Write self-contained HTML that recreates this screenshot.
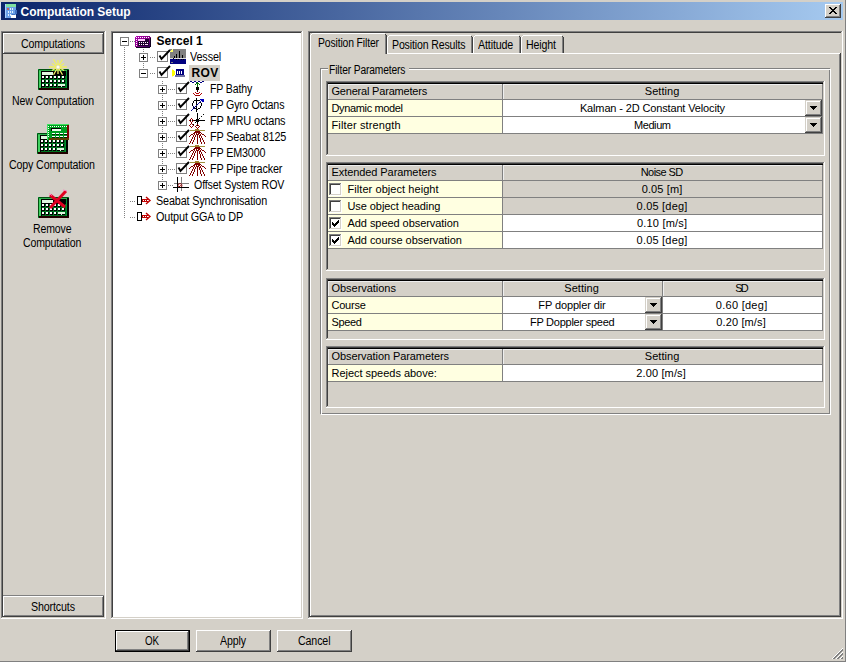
<!DOCTYPE html><html><head><meta charset="utf-8"><style>
html,body{margin:0;padding:0;width:846px;height:662px;overflow:hidden;background:#d4d0c8}
div,span,svg{position:absolute}
span{white-space:pre}
</style></head><body>
<div style="left:0px;top:0px;width:846px;height:662px;background:#d4d0c8;"></div>
<div style="left:845px;top:0px;width:1px;height:662px;background:#808080;"></div>
<div style="left:0px;top:661px;width:846px;height:1px;background:#808080;"></div>
<div style="left:844px;top:0px;width:1px;height:661px;background:#d4d0c8;"></div>
<div style="left:0px;top:2px;width:1px;height:18px;background:#d8dcf0;"></div>
<div style="left:1px;top:2px;width:842px;height:18px;background:linear-gradient(to right,#0a246a,#a6caf0);"></div>
<div style="left:825px;top:4px;width:16px;height:14px;background:#d4d0c8;"></div>
<div style="left:825px;top:4px;width:16px;height:1px;background:#ffffff;"></div>
<div style="left:825px;top:4px;width:1px;height:14px;background:#ffffff;"></div>
<div style="left:825px;top:17px;width:16px;height:1px;background:#404040;"></div>
<div style="left:840px;top:4px;width:1px;height:14px;background:#404040;"></div>
<div style="left:826px;top:16px;width:14px;height:1px;background:#808080;"></div>
<div style="left:839px;top:5px;width:1px;height:12px;background:#808080;"></div>
<div style="left:829px;top:7px;width:1px;height:1px;background:#000;"></div>
<div style="left:830px;top:7px;width:1px;height:1px;background:#000;"></div>
<div style="left:835px;top:7px;width:1px;height:1px;background:#000;"></div>
<div style="left:836px;top:7px;width:1px;height:1px;background:#000;"></div>
<div style="left:830px;top:8px;width:1px;height:1px;background:#000;"></div>
<div style="left:831px;top:8px;width:1px;height:1px;background:#000;"></div>
<div style="left:834px;top:8px;width:1px;height:1px;background:#000;"></div>
<div style="left:835px;top:8px;width:1px;height:1px;background:#000;"></div>
<div style="left:831px;top:9px;width:1px;height:1px;background:#000;"></div>
<div style="left:832px;top:9px;width:1px;height:1px;background:#000;"></div>
<div style="left:833px;top:9px;width:1px;height:1px;background:#000;"></div>
<div style="left:834px;top:9px;width:1px;height:1px;background:#000;"></div>
<div style="left:832px;top:10px;width:1px;height:1px;background:#000;"></div>
<div style="left:833px;top:10px;width:1px;height:1px;background:#000;"></div>
<div style="left:831px;top:11px;width:1px;height:1px;background:#000;"></div>
<div style="left:832px;top:11px;width:1px;height:1px;background:#000;"></div>
<div style="left:833px;top:11px;width:1px;height:1px;background:#000;"></div>
<div style="left:834px;top:11px;width:1px;height:1px;background:#000;"></div>
<div style="left:830px;top:12px;width:1px;height:1px;background:#000;"></div>
<div style="left:831px;top:12px;width:1px;height:1px;background:#000;"></div>
<div style="left:834px;top:12px;width:1px;height:1px;background:#000;"></div>
<div style="left:835px;top:12px;width:1px;height:1px;background:#000;"></div>
<div style="left:829px;top:13px;width:1px;height:1px;background:#000;"></div>
<div style="left:830px;top:13px;width:1px;height:1px;background:#000;"></div>
<div style="left:835px;top:13px;width:1px;height:1px;background:#000;"></div>
<div style="left:836px;top:13px;width:1px;height:1px;background:#000;"></div>
<div style="left:1px;top:31px;width:105px;height:588px;background:#d4d0c8;"></div>
<div style="left:1px;top:31px;width:105px;height:1px;background:#808080;"></div>
<div style="left:1px;top:31px;width:1px;height:588px;background:#808080;"></div>
<div style="left:1px;top:618px;width:105px;height:1px;background:#ffffff;"></div>
<div style="left:105px;top:31px;width:1px;height:588px;background:#ffffff;"></div>
<div style="left:2px;top:32px;width:103px;height:1px;background:#404040;"></div>
<div style="left:2px;top:32px;width:1px;height:586px;background:#404040;"></div>
<div style="left:2px;top:617px;width:103px;height:1px;background:#d4d0c8;"></div>
<div style="left:104px;top:32px;width:1px;height:586px;background:#d4d0c8;"></div>
<div style="left:3px;top:33px;width:101px;height:21px;background:#d4d0c8;"></div>
<div style="left:3px;top:33px;width:101px;height:1px;background:#ffffff;"></div>
<div style="left:3px;top:33px;width:1px;height:21px;background:#ffffff;"></div>
<div style="left:3px;top:53px;width:101px;height:1px;background:#404040;"></div>
<div style="left:103px;top:33px;width:1px;height:21px;background:#404040;"></div>
<div style="left:4px;top:52px;width:99px;height:1px;background:#808080;"></div>
<div style="left:102px;top:34px;width:1px;height:19px;background:#808080;"></div>
<div style="left:3px;top:595px;width:101px;height:1px;background:#808080;"></div>
<div style="left:3px;top:596px;width:101px;height:21px;background:#d4d0c8;"></div>
<div style="left:3px;top:596px;width:101px;height:1px;background:#ffffff;"></div>
<div style="left:3px;top:596px;width:1px;height:21px;background:#ffffff;"></div>
<div style="left:3px;top:616px;width:101px;height:1px;background:#404040;"></div>
<div style="left:103px;top:596px;width:1px;height:21px;background:#404040;"></div>
<div style="left:4px;top:615px;width:99px;height:1px;background:#808080;"></div>
<div style="left:102px;top:597px;width:1px;height:19px;background:#808080;"></div>
<div style="left:111px;top:31px;width:192px;height:588px;background:#ffffff;"></div>
<div style="left:111px;top:31px;width:192px;height:1px;background:#808080;"></div>
<div style="left:111px;top:31px;width:1px;height:588px;background:#808080;"></div>
<div style="left:111px;top:618px;width:192px;height:1px;background:#ffffff;"></div>
<div style="left:302px;top:31px;width:1px;height:588px;background:#ffffff;"></div>
<div style="left:112px;top:32px;width:190px;height:1px;background:#404040;"></div>
<div style="left:112px;top:32px;width:1px;height:586px;background:#404040;"></div>
<div style="left:112px;top:617px;width:190px;height:1px;background:#d4d0c8;"></div>
<div style="left:301px;top:32px;width:1px;height:586px;background:#d4d0c8;"></div>
<div style="left:308px;top:31px;width:535px;height:588px;background:#d4d0c8;"></div>
<div style="left:308px;top:31px;width:535px;height:1px;background:#808080;"></div>
<div style="left:308px;top:31px;width:1px;height:588px;background:#808080;"></div>
<div style="left:308px;top:618px;width:535px;height:1px;background:#ffffff;"></div>
<div style="left:842px;top:31px;width:1px;height:588px;background:#ffffff;"></div>
<div style="left:309px;top:32px;width:533px;height:1px;background:#404040;"></div>
<div style="left:309px;top:32px;width:1px;height:586px;background:#404040;"></div>
<div style="left:309px;top:617px;width:533px;height:1px;background:#d4d0c8;"></div>
<div style="left:841px;top:32px;width:1px;height:586px;background:#d4d0c8;"></div>
<div style="left:310px;top:53px;width:531px;height:1px;background:#ffffff;"></div>
<div style="left:310px;top:53px;width:1px;height:564px;background:#ffffff;"></div>
<div style="left:310px;top:616px;width:531px;height:1px;background:#404040;"></div>
<div style="left:840px;top:53px;width:1px;height:564px;background:#404040;"></div>
<div style="left:311px;top:615px;width:529px;height:1px;background:#808080;"></div>
<div style="left:839px;top:54px;width:1px;height:562px;background:#808080;"></div>
<div style="left:115px;top:630px;width:75px;height:22px;background:#000;"></div>
<div style="left:116px;top:631px;width:73px;height:20px;background:#d4d0c8;"></div>
<div style="left:116px;top:631px;width:73px;height:1px;background:#ffffff;"></div>
<div style="left:116px;top:631px;width:1px;height:20px;background:#ffffff;"></div>
<div style="left:116px;top:650px;width:73px;height:1px;background:#404040;"></div>
<div style="left:188px;top:631px;width:1px;height:20px;background:#404040;"></div>
<div style="left:117px;top:649px;width:71px;height:1px;background:#808080;"></div>
<div style="left:187px;top:632px;width:1px;height:18px;background:#808080;"></div>
<div style="left:196px;top:630px;width:75px;height:22px;background:#d4d0c8;"></div>
<div style="left:196px;top:630px;width:75px;height:1px;background:#ffffff;"></div>
<div style="left:196px;top:630px;width:1px;height:22px;background:#ffffff;"></div>
<div style="left:196px;top:651px;width:75px;height:1px;background:#404040;"></div>
<div style="left:270px;top:630px;width:1px;height:22px;background:#404040;"></div>
<div style="left:197px;top:650px;width:73px;height:1px;background:#808080;"></div>
<div style="left:269px;top:631px;width:1px;height:20px;background:#808080;"></div>
<div style="left:277px;top:630px;width:75px;height:22px;background:#d4d0c8;"></div>
<div style="left:277px;top:630px;width:75px;height:1px;background:#ffffff;"></div>
<div style="left:277px;top:630px;width:1px;height:22px;background:#ffffff;"></div>
<div style="left:277px;top:651px;width:75px;height:1px;background:#404040;"></div>
<div style="left:351px;top:630px;width:1px;height:22px;background:#404040;"></div>
<div style="left:278px;top:650px;width:73px;height:1px;background:#808080;"></div>
<div style="left:350px;top:631px;width:1px;height:20px;background:#808080;"></div>
<div style="left:832px;top:658px;width:1px;height:1px;background:#fff;"></div>
<div style="left:833px;top:657px;width:1px;height:1px;background:#fff;"></div>
<div style="left:833px;top:658px;width:1px;height:1px;background:#808080;"></div>
<div style="left:834px;top:656px;width:1px;height:1px;background:#fff;"></div>
<div style="left:834px;top:657px;width:1px;height:1px;background:#808080;"></div>
<div style="left:834px;top:658px;width:1px;height:1px;background:#808080;"></div>
<div style="left:835px;top:655px;width:1px;height:1px;background:#fff;"></div>
<div style="left:835px;top:656px;width:1px;height:1px;background:#808080;"></div>
<div style="left:835px;top:657px;width:1px;height:1px;background:#808080;"></div>
<div style="left:836px;top:654px;width:1px;height:1px;background:#fff;"></div>
<div style="left:836px;top:655px;width:1px;height:1px;background:#808080;"></div>
<div style="left:836px;top:656px;width:1px;height:1px;background:#808080;"></div>
<div style="left:836px;top:658px;width:1px;height:1px;background:#fff;"></div>
<div style="left:837px;top:653px;width:1px;height:1px;background:#fff;"></div>
<div style="left:837px;top:654px;width:1px;height:1px;background:#808080;"></div>
<div style="left:837px;top:655px;width:1px;height:1px;background:#808080;"></div>
<div style="left:837px;top:657px;width:1px;height:1px;background:#fff;"></div>
<div style="left:837px;top:658px;width:1px;height:1px;background:#808080;"></div>
<div style="left:838px;top:652px;width:1px;height:1px;background:#fff;"></div>
<div style="left:838px;top:653px;width:1px;height:1px;background:#808080;"></div>
<div style="left:838px;top:654px;width:1px;height:1px;background:#808080;"></div>
<div style="left:838px;top:656px;width:1px;height:1px;background:#fff;"></div>
<div style="left:838px;top:657px;width:1px;height:1px;background:#808080;"></div>
<div style="left:838px;top:658px;width:1px;height:1px;background:#808080;"></div>
<div style="left:839px;top:651px;width:1px;height:1px;background:#fff;"></div>
<div style="left:839px;top:652px;width:1px;height:1px;background:#808080;"></div>
<div style="left:839px;top:653px;width:1px;height:1px;background:#808080;"></div>
<div style="left:839px;top:655px;width:1px;height:1px;background:#fff;"></div>
<div style="left:839px;top:656px;width:1px;height:1px;background:#808080;"></div>
<div style="left:839px;top:657px;width:1px;height:1px;background:#808080;"></div>
<div style="left:840px;top:650px;width:1px;height:1px;background:#fff;"></div>
<div style="left:840px;top:651px;width:1px;height:1px;background:#808080;"></div>
<div style="left:840px;top:652px;width:1px;height:1px;background:#808080;"></div>
<div style="left:840px;top:654px;width:1px;height:1px;background:#fff;"></div>
<div style="left:840px;top:655px;width:1px;height:1px;background:#808080;"></div>
<div style="left:840px;top:656px;width:1px;height:1px;background:#808080;"></div>
<div style="left:840px;top:658px;width:1px;height:1px;background:#fff;"></div>
<div style="left:841px;top:649px;width:1px;height:1px;background:#fff;"></div>
<div style="left:841px;top:650px;width:1px;height:1px;background:#808080;"></div>
<div style="left:841px;top:651px;width:1px;height:1px;background:#808080;"></div>
<div style="left:841px;top:653px;width:1px;height:1px;background:#fff;"></div>
<div style="left:841px;top:654px;width:1px;height:1px;background:#808080;"></div>
<div style="left:841px;top:655px;width:1px;height:1px;background:#808080;"></div>
<div style="left:841px;top:657px;width:1px;height:1px;background:#fff;"></div>
<div style="left:841px;top:658px;width:1px;height:1px;background:#808080;"></div>
<div style="left:842px;top:648px;width:1px;height:1px;background:#fff;"></div>
<div style="left:842px;top:649px;width:1px;height:1px;background:#808080;"></div>
<div style="left:842px;top:650px;width:1px;height:1px;background:#808080;"></div>
<div style="left:842px;top:652px;width:1px;height:1px;background:#fff;"></div>
<div style="left:842px;top:653px;width:1px;height:1px;background:#808080;"></div>
<div style="left:842px;top:654px;width:1px;height:1px;background:#808080;"></div>
<div style="left:842px;top:656px;width:1px;height:1px;background:#fff;"></div>
<div style="left:842px;top:657px;width:1px;height:1px;background:#808080;"></div>
<div style="left:842px;top:658px;width:1px;height:1px;background:#808080;"></div>
<div style="left:189px;top:65px;width:31px;height:16px;background:#d4d0c8;"></div>
<div style="left:387px;top:35px;width:86px;height:18px;background:#d4d0c8;"></div>
<div style="left:389px;top:35px;width:82px;height:1px;background:#fff;"></div>
<div style="left:388px;top:36px;width:1px;height:1px;background:#fff;"></div>
<div style="left:387px;top:37px;width:1px;height:16px;background:#fff;"></div>
<div style="left:471px;top:36px;width:1px;height:1px;background:#404040;"></div>
<div style="left:472px;top:37px;width:1px;height:16px;background:#404040;"></div>
<div style="left:471px;top:37px;width:1px;height:16px;background:#808080;"></div>
<div style="left:473px;top:35px;width:48px;height:18px;background:#d4d0c8;"></div>
<div style="left:475px;top:35px;width:44px;height:1px;background:#fff;"></div>
<div style="left:474px;top:36px;width:1px;height:1px;background:#fff;"></div>
<div style="left:473px;top:37px;width:1px;height:16px;background:#fff;"></div>
<div style="left:519px;top:36px;width:1px;height:1px;background:#404040;"></div>
<div style="left:520px;top:37px;width:1px;height:16px;background:#404040;"></div>
<div style="left:519px;top:37px;width:1px;height:16px;background:#808080;"></div>
<div style="left:521px;top:35px;width:43px;height:18px;background:#d4d0c8;"></div>
<div style="left:523px;top:35px;width:39px;height:1px;background:#fff;"></div>
<div style="left:522px;top:36px;width:1px;height:1px;background:#fff;"></div>
<div style="left:521px;top:37px;width:1px;height:16px;background:#fff;"></div>
<div style="left:562px;top:36px;width:1px;height:1px;background:#404040;"></div>
<div style="left:563px;top:37px;width:1px;height:16px;background:#404040;"></div>
<div style="left:562px;top:37px;width:1px;height:16px;background:#808080;"></div>
<div style="left:310px;top:33px;width:77px;height:21px;background:#d4d0c8;"></div>
<div style="left:312px;top:33px;width:73px;height:1px;background:#fff;"></div>
<div style="left:311px;top:34px;width:1px;height:1px;background:#fff;"></div>
<div style="left:310px;top:35px;width:1px;height:19px;background:#fff;"></div>
<div style="left:385px;top:34px;width:1px;height:1px;background:#404040;"></div>
<div style="left:386px;top:35px;width:1px;height:19px;background:#404040;"></div>
<div style="left:385px;top:35px;width:1px;height:19px;background:#808080;"></div>
<div style="left:320px;top:68px;width:510px;height:1px;background:#808080;"></div>
<div style="left:320px;top:68px;width:1px;height:346px;background:#808080;"></div>
<div style="left:320px;top:413px;width:510px;height:1px;background:#808080;"></div>
<div style="left:829px;top:68px;width:1px;height:346px;background:#808080;"></div>
<div style="left:321px;top:69px;width:510px;height:1px;background:#ffffff;"></div>
<div style="left:321px;top:69px;width:1px;height:346px;background:#ffffff;"></div>
<div style="left:321px;top:414px;width:510px;height:1px;background:#ffffff;"></div>
<div style="left:830px;top:69px;width:1px;height:346px;background:#ffffff;"></div>
<div style="left:328px;top:62px;width:81px;height:8px;background:#d4d0c8;"></div>
<div style="left:320px;top:68px;width:1px;height:1px;background:#808080;"></div>
<div style="left:326px;top:81px;width:499px;height:75px;background:#d4d0c8;"></div>
<div style="left:326px;top:81px;width:499px;height:1px;background:#808080;"></div>
<div style="left:326px;top:81px;width:1px;height:75px;background:#808080;"></div>
<div style="left:326px;top:155px;width:499px;height:1px;background:#ffffff;"></div>
<div style="left:824px;top:81px;width:1px;height:75px;background:#ffffff;"></div>
<div style="left:327px;top:82px;width:497px;height:1px;background:#404040;"></div>
<div style="left:327px;top:82px;width:1px;height:73px;background:#404040;"></div>
<div style="left:327px;top:154px;width:497px;height:1px;background:#d4d0c8;"></div>
<div style="left:823px;top:82px;width:1px;height:73px;background:#d4d0c8;"></div>
<div style="left:328px;top:83px;width:495px;height:1px;background:#000;"></div>
<div style="left:328px;top:84px;width:174px;height:1px;background:#eeeeee;"></div>
<div style="left:328px;top:84px;width:1px;height:15px;background:#eeeeee;"></div>
<div style="left:503px;top:84px;width:319px;height:1px;background:#eeeeee;"></div>
<div style="left:503px;top:84px;width:1px;height:15px;background:#eeeeee;"></div>
<div style="left:502px;top:84px;width:1px;height:50px;background:#808080;"></div>
<div style="left:822px;top:84px;width:1px;height:50px;background:#808080;"></div>
<div style="left:328px;top:99px;width:495px;height:1px;background:#808080;"></div>
<div style="left:328px;top:100px;width:174px;height:16px;background:#ffffe1;"></div>
<div style="left:503px;top:100px;width:319px;height:16px;background:#fff;"></div>
<div style="left:328px;top:116px;width:495px;height:1px;background:#808080;"></div>
<div style="left:328px;top:117px;width:174px;height:16px;background:#ffffe1;"></div>
<div style="left:503px;top:117px;width:319px;height:16px;background:#fff;"></div>
<div style="left:328px;top:133px;width:495px;height:1px;background:#808080;"></div>
<div style="left:805px;top:100px;width:17px;height:16px;background:#d4d0c8;"></div>
<div style="left:805px;top:100px;width:17px;height:1px;background:#d4d0c8;"></div>
<div style="left:805px;top:100px;width:1px;height:16px;background:#d4d0c8;"></div>
<div style="left:805px;top:115px;width:17px;height:1px;background:#404040;"></div>
<div style="left:821px;top:100px;width:1px;height:16px;background:#404040;"></div>
<div style="left:806px;top:101px;width:15px;height:1px;background:#fff;"></div>
<div style="left:806px;top:101px;width:1px;height:14px;background:#fff;"></div>
<div style="left:806px;top:114px;width:15px;height:1px;background:#808080;"></div>
<div style="left:820px;top:101px;width:1px;height:14px;background:#808080;"></div>
<div style="left:810px;top:106px;width:7px;height:1px;background:#000;"></div>
<div style="left:811px;top:107px;width:5px;height:1px;background:#000;"></div>
<div style="left:812px;top:108px;width:3px;height:1px;background:#000;"></div>
<div style="left:813px;top:109px;width:1px;height:1px;background:#000;"></div>
<div style="left:805px;top:117px;width:17px;height:16px;background:#d4d0c8;"></div>
<div style="left:805px;top:117px;width:17px;height:1px;background:#d4d0c8;"></div>
<div style="left:805px;top:117px;width:1px;height:16px;background:#d4d0c8;"></div>
<div style="left:805px;top:132px;width:17px;height:1px;background:#404040;"></div>
<div style="left:821px;top:117px;width:1px;height:16px;background:#404040;"></div>
<div style="left:806px;top:118px;width:15px;height:1px;background:#fff;"></div>
<div style="left:806px;top:118px;width:1px;height:14px;background:#fff;"></div>
<div style="left:806px;top:131px;width:15px;height:1px;background:#808080;"></div>
<div style="left:820px;top:118px;width:1px;height:14px;background:#808080;"></div>
<div style="left:810px;top:123px;width:7px;height:1px;background:#000;"></div>
<div style="left:811px;top:124px;width:5px;height:1px;background:#000;"></div>
<div style="left:812px;top:125px;width:3px;height:1px;background:#000;"></div>
<div style="left:813px;top:126px;width:1px;height:1px;background:#000;"></div>
<div style="left:326px;top:162px;width:499px;height:109px;background:#d4d0c8;"></div>
<div style="left:326px;top:162px;width:499px;height:1px;background:#808080;"></div>
<div style="left:326px;top:162px;width:1px;height:109px;background:#808080;"></div>
<div style="left:326px;top:270px;width:499px;height:1px;background:#ffffff;"></div>
<div style="left:824px;top:162px;width:1px;height:109px;background:#ffffff;"></div>
<div style="left:327px;top:163px;width:497px;height:1px;background:#404040;"></div>
<div style="left:327px;top:163px;width:1px;height:107px;background:#404040;"></div>
<div style="left:327px;top:269px;width:497px;height:1px;background:#d4d0c8;"></div>
<div style="left:823px;top:163px;width:1px;height:107px;background:#d4d0c8;"></div>
<div style="left:328px;top:164px;width:495px;height:1px;background:#000;"></div>
<div style="left:328px;top:165px;width:174px;height:1px;background:#eeeeee;"></div>
<div style="left:328px;top:165px;width:1px;height:15px;background:#eeeeee;"></div>
<div style="left:503px;top:165px;width:319px;height:1px;background:#eeeeee;"></div>
<div style="left:503px;top:165px;width:1px;height:15px;background:#eeeeee;"></div>
<div style="left:502px;top:165px;width:1px;height:84px;background:#808080;"></div>
<div style="left:822px;top:165px;width:1px;height:84px;background:#808080;"></div>
<div style="left:328px;top:180px;width:495px;height:1px;background:#808080;"></div>
<div style="left:328px;top:181px;width:174px;height:16px;background:#ffffe1;"></div>
<div style="left:503px;top:181px;width:319px;height:16px;background:#d4d0c8;"></div>
<div style="left:328px;top:197px;width:495px;height:1px;background:#808080;"></div>
<div style="left:328px;top:198px;width:174px;height:16px;background:#ffffe1;"></div>
<div style="left:503px;top:198px;width:319px;height:16px;background:#d4d0c8;"></div>
<div style="left:328px;top:214px;width:495px;height:1px;background:#808080;"></div>
<div style="left:328px;top:215px;width:174px;height:16px;background:#ffffe1;"></div>
<div style="left:503px;top:215px;width:319px;height:16px;background:#fff;"></div>
<div style="left:328px;top:231px;width:495px;height:1px;background:#808080;"></div>
<div style="left:328px;top:232px;width:174px;height:16px;background:#ffffe1;"></div>
<div style="left:503px;top:232px;width:319px;height:16px;background:#fff;"></div>
<div style="left:328px;top:248px;width:495px;height:1px;background:#808080;"></div>
<div style="left:329px;top:183px;width:13px;height:1px;background:#808080;"></div>
<div style="left:329px;top:183px;width:1px;height:13px;background:#808080;"></div>
<div style="left:329px;top:195px;width:13px;height:1px;background:#ffffff;"></div>
<div style="left:341px;top:183px;width:1px;height:13px;background:#ffffff;"></div>
<div style="left:330px;top:184px;width:11px;height:1px;background:#404040;"></div>
<div style="left:330px;top:184px;width:1px;height:11px;background:#404040;"></div>
<div style="left:330px;top:194px;width:11px;height:1px;background:#d4d0c8;"></div>
<div style="left:340px;top:184px;width:1px;height:11px;background:#d4d0c8;"></div>
<div style="left:331px;top:185px;width:9px;height:9px;background:#fff;"></div>
<div style="left:329px;top:200px;width:13px;height:1px;background:#808080;"></div>
<div style="left:329px;top:200px;width:1px;height:13px;background:#808080;"></div>
<div style="left:329px;top:212px;width:13px;height:1px;background:#ffffff;"></div>
<div style="left:341px;top:200px;width:1px;height:13px;background:#ffffff;"></div>
<div style="left:330px;top:201px;width:11px;height:1px;background:#404040;"></div>
<div style="left:330px;top:201px;width:1px;height:11px;background:#404040;"></div>
<div style="left:330px;top:211px;width:11px;height:1px;background:#d4d0c8;"></div>
<div style="left:340px;top:201px;width:1px;height:11px;background:#d4d0c8;"></div>
<div style="left:331px;top:202px;width:9px;height:9px;background:#fff;"></div>
<div style="left:329px;top:217px;width:13px;height:1px;background:#808080;"></div>
<div style="left:329px;top:217px;width:1px;height:13px;background:#808080;"></div>
<div style="left:329px;top:229px;width:13px;height:1px;background:#ffffff;"></div>
<div style="left:341px;top:217px;width:1px;height:13px;background:#ffffff;"></div>
<div style="left:330px;top:218px;width:11px;height:1px;background:#404040;"></div>
<div style="left:330px;top:218px;width:1px;height:11px;background:#404040;"></div>
<div style="left:330px;top:228px;width:11px;height:1px;background:#d4d0c8;"></div>
<div style="left:340px;top:218px;width:1px;height:11px;background:#d4d0c8;"></div>
<div style="left:331px;top:219px;width:9px;height:9px;background:#fff;"></div>
<div style="left:329px;top:234px;width:13px;height:1px;background:#808080;"></div>
<div style="left:329px;top:234px;width:1px;height:13px;background:#808080;"></div>
<div style="left:329px;top:246px;width:13px;height:1px;background:#ffffff;"></div>
<div style="left:341px;top:234px;width:1px;height:13px;background:#ffffff;"></div>
<div style="left:330px;top:235px;width:11px;height:1px;background:#404040;"></div>
<div style="left:330px;top:235px;width:1px;height:11px;background:#404040;"></div>
<div style="left:330px;top:245px;width:11px;height:1px;background:#d4d0c8;"></div>
<div style="left:340px;top:235px;width:1px;height:11px;background:#d4d0c8;"></div>
<div style="left:331px;top:236px;width:9px;height:9px;background:#fff;"></div>
<div style="left:326px;top:278px;width:499px;height:62px;background:#d4d0c8;"></div>
<div style="left:326px;top:278px;width:499px;height:1px;background:#808080;"></div>
<div style="left:326px;top:278px;width:1px;height:62px;background:#808080;"></div>
<div style="left:326px;top:339px;width:499px;height:1px;background:#ffffff;"></div>
<div style="left:824px;top:278px;width:1px;height:62px;background:#ffffff;"></div>
<div style="left:327px;top:279px;width:497px;height:1px;background:#404040;"></div>
<div style="left:327px;top:279px;width:1px;height:60px;background:#404040;"></div>
<div style="left:327px;top:338px;width:497px;height:1px;background:#d4d0c8;"></div>
<div style="left:823px;top:279px;width:1px;height:60px;background:#d4d0c8;"></div>
<div style="left:328px;top:280px;width:495px;height:1px;background:#000;"></div>
<div style="left:328px;top:281px;width:174px;height:1px;background:#eeeeee;"></div>
<div style="left:328px;top:281px;width:1px;height:15px;background:#eeeeee;"></div>
<div style="left:503px;top:281px;width:159px;height:1px;background:#eeeeee;"></div>
<div style="left:503px;top:281px;width:1px;height:15px;background:#eeeeee;"></div>
<div style="left:663px;top:281px;width:159px;height:1px;background:#eeeeee;"></div>
<div style="left:663px;top:281px;width:1px;height:15px;background:#eeeeee;"></div>
<div style="left:502px;top:281px;width:1px;height:50px;background:#808080;"></div>
<div style="left:662px;top:281px;width:1px;height:50px;background:#808080;"></div>
<div style="left:822px;top:281px;width:1px;height:50px;background:#808080;"></div>
<div style="left:328px;top:296px;width:495px;height:1px;background:#808080;"></div>
<div style="left:328px;top:297px;width:174px;height:16px;background:#ffffe1;"></div>
<div style="left:503px;top:297px;width:159px;height:16px;background:#fff;"></div>
<div style="left:663px;top:297px;width:159px;height:16px;background:#fff;"></div>
<div style="left:328px;top:313px;width:495px;height:1px;background:#808080;"></div>
<div style="left:328px;top:314px;width:174px;height:16px;background:#ffffe1;"></div>
<div style="left:503px;top:314px;width:159px;height:16px;background:#fff;"></div>
<div style="left:663px;top:314px;width:159px;height:16px;background:#fff;"></div>
<div style="left:328px;top:330px;width:495px;height:1px;background:#808080;"></div>
<div style="left:645px;top:297px;width:17px;height:16px;background:#d4d0c8;"></div>
<div style="left:645px;top:297px;width:17px;height:1px;background:#d4d0c8;"></div>
<div style="left:645px;top:297px;width:1px;height:16px;background:#d4d0c8;"></div>
<div style="left:645px;top:312px;width:17px;height:1px;background:#404040;"></div>
<div style="left:661px;top:297px;width:1px;height:16px;background:#404040;"></div>
<div style="left:646px;top:298px;width:15px;height:1px;background:#fff;"></div>
<div style="left:646px;top:298px;width:1px;height:14px;background:#fff;"></div>
<div style="left:646px;top:311px;width:15px;height:1px;background:#808080;"></div>
<div style="left:660px;top:298px;width:1px;height:14px;background:#808080;"></div>
<div style="left:650px;top:303px;width:7px;height:1px;background:#000;"></div>
<div style="left:651px;top:304px;width:5px;height:1px;background:#000;"></div>
<div style="left:652px;top:305px;width:3px;height:1px;background:#000;"></div>
<div style="left:653px;top:306px;width:1px;height:1px;background:#000;"></div>
<div style="left:645px;top:314px;width:17px;height:16px;background:#d4d0c8;"></div>
<div style="left:645px;top:314px;width:17px;height:1px;background:#d4d0c8;"></div>
<div style="left:645px;top:314px;width:1px;height:16px;background:#d4d0c8;"></div>
<div style="left:645px;top:329px;width:17px;height:1px;background:#404040;"></div>
<div style="left:661px;top:314px;width:1px;height:16px;background:#404040;"></div>
<div style="left:646px;top:315px;width:15px;height:1px;background:#fff;"></div>
<div style="left:646px;top:315px;width:1px;height:14px;background:#fff;"></div>
<div style="left:646px;top:328px;width:15px;height:1px;background:#808080;"></div>
<div style="left:660px;top:315px;width:1px;height:14px;background:#808080;"></div>
<div style="left:650px;top:320px;width:7px;height:1px;background:#000;"></div>
<div style="left:651px;top:321px;width:5px;height:1px;background:#000;"></div>
<div style="left:652px;top:322px;width:3px;height:1px;background:#000;"></div>
<div style="left:653px;top:323px;width:1px;height:1px;background:#000;"></div>
<div style="left:326px;top:346px;width:499px;height:62px;background:#d4d0c8;"></div>
<div style="left:326px;top:346px;width:499px;height:1px;background:#808080;"></div>
<div style="left:326px;top:346px;width:1px;height:62px;background:#808080;"></div>
<div style="left:326px;top:407px;width:499px;height:1px;background:#ffffff;"></div>
<div style="left:824px;top:346px;width:1px;height:62px;background:#ffffff;"></div>
<div style="left:327px;top:347px;width:497px;height:1px;background:#404040;"></div>
<div style="left:327px;top:347px;width:1px;height:60px;background:#404040;"></div>
<div style="left:327px;top:406px;width:497px;height:1px;background:#d4d0c8;"></div>
<div style="left:823px;top:347px;width:1px;height:60px;background:#d4d0c8;"></div>
<div style="left:328px;top:348px;width:495px;height:1px;background:#000;"></div>
<div style="left:328px;top:349px;width:174px;height:1px;background:#eeeeee;"></div>
<div style="left:328px;top:349px;width:1px;height:15px;background:#eeeeee;"></div>
<div style="left:503px;top:349px;width:319px;height:1px;background:#eeeeee;"></div>
<div style="left:503px;top:349px;width:1px;height:15px;background:#eeeeee;"></div>
<div style="left:502px;top:349px;width:1px;height:33px;background:#808080;"></div>
<div style="left:822px;top:349px;width:1px;height:33px;background:#808080;"></div>
<div style="left:328px;top:364px;width:495px;height:1px;background:#808080;"></div>
<div style="left:328px;top:365px;width:174px;height:16px;background:#ffffe1;"></div>
<div style="left:503px;top:365px;width:319px;height:16px;background:#fff;"></div>
<div style="left:328px;top:381px;width:495px;height:1px;background:#808080;"></div>
<svg style="position:absolute;left:0;top:0" width="846" height="662" shape-rendering="crispEdges"><rect x="124" y="47" width="1" height="1" fill="#808080"/><rect x="124" y="49" width="1" height="1" fill="#808080"/><rect x="124" y="51" width="1" height="1" fill="#808080"/><rect x="124" y="53" width="1" height="1" fill="#808080"/><rect x="124" y="55" width="1" height="1" fill="#808080"/><rect x="124" y="57" width="1" height="1" fill="#808080"/><rect x="124" y="59" width="1" height="1" fill="#808080"/><rect x="124" y="61" width="1" height="1" fill="#808080"/><rect x="124" y="63" width="1" height="1" fill="#808080"/><rect x="124" y="65" width="1" height="1" fill="#808080"/><rect x="124" y="67" width="1" height="1" fill="#808080"/><rect x="124" y="69" width="1" height="1" fill="#808080"/><rect x="124" y="71" width="1" height="1" fill="#808080"/><rect x="124" y="73" width="1" height="1" fill="#808080"/><rect x="124" y="75" width="1" height="1" fill="#808080"/><rect x="124" y="77" width="1" height="1" fill="#808080"/><rect x="124" y="79" width="1" height="1" fill="#808080"/><rect x="124" y="81" width="1" height="1" fill="#808080"/><rect x="124" y="83" width="1" height="1" fill="#808080"/><rect x="124" y="85" width="1" height="1" fill="#808080"/><rect x="124" y="87" width="1" height="1" fill="#808080"/><rect x="124" y="89" width="1" height="1" fill="#808080"/><rect x="124" y="91" width="1" height="1" fill="#808080"/><rect x="124" y="93" width="1" height="1" fill="#808080"/><rect x="124" y="95" width="1" height="1" fill="#808080"/><rect x="124" y="97" width="1" height="1" fill="#808080"/><rect x="124" y="99" width="1" height="1" fill="#808080"/><rect x="124" y="101" width="1" height="1" fill="#808080"/><rect x="124" y="103" width="1" height="1" fill="#808080"/><rect x="124" y="105" width="1" height="1" fill="#808080"/><rect x="124" y="107" width="1" height="1" fill="#808080"/><rect x="124" y="109" width="1" height="1" fill="#808080"/><rect x="124" y="111" width="1" height="1" fill="#808080"/><rect x="124" y="113" width="1" height="1" fill="#808080"/><rect x="124" y="115" width="1" height="1" fill="#808080"/><rect x="124" y="117" width="1" height="1" fill="#808080"/><rect x="124" y="119" width="1" height="1" fill="#808080"/><rect x="124" y="121" width="1" height="1" fill="#808080"/><rect x="124" y="123" width="1" height="1" fill="#808080"/><rect x="124" y="125" width="1" height="1" fill="#808080"/><rect x="124" y="127" width="1" height="1" fill="#808080"/><rect x="124" y="129" width="1" height="1" fill="#808080"/><rect x="124" y="131" width="1" height="1" fill="#808080"/><rect x="124" y="133" width="1" height="1" fill="#808080"/><rect x="124" y="135" width="1" height="1" fill="#808080"/><rect x="124" y="137" width="1" height="1" fill="#808080"/><rect x="124" y="139" width="1" height="1" fill="#808080"/><rect x="124" y="141" width="1" height="1" fill="#808080"/><rect x="124" y="143" width="1" height="1" fill="#808080"/><rect x="124" y="145" width="1" height="1" fill="#808080"/><rect x="124" y="147" width="1" height="1" fill="#808080"/><rect x="124" y="149" width="1" height="1" fill="#808080"/><rect x="124" y="151" width="1" height="1" fill="#808080"/><rect x="124" y="153" width="1" height="1" fill="#808080"/><rect x="124" y="155" width="1" height="1" fill="#808080"/><rect x="124" y="157" width="1" height="1" fill="#808080"/><rect x="124" y="159" width="1" height="1" fill="#808080"/><rect x="124" y="161" width="1" height="1" fill="#808080"/><rect x="124" y="163" width="1" height="1" fill="#808080"/><rect x="124" y="165" width="1" height="1" fill="#808080"/><rect x="124" y="167" width="1" height="1" fill="#808080"/><rect x="124" y="169" width="1" height="1" fill="#808080"/><rect x="124" y="171" width="1" height="1" fill="#808080"/><rect x="124" y="173" width="1" height="1" fill="#808080"/><rect x="124" y="175" width="1" height="1" fill="#808080"/><rect x="124" y="177" width="1" height="1" fill="#808080"/><rect x="124" y="179" width="1" height="1" fill="#808080"/><rect x="124" y="181" width="1" height="1" fill="#808080"/><rect x="124" y="183" width="1" height="1" fill="#808080"/><rect x="124" y="185" width="1" height="1" fill="#808080"/><rect x="124" y="187" width="1" height="1" fill="#808080"/><rect x="124" y="189" width="1" height="1" fill="#808080"/><rect x="124" y="191" width="1" height="1" fill="#808080"/><rect x="124" y="193" width="1" height="1" fill="#808080"/><rect x="124" y="195" width="1" height="1" fill="#808080"/><rect x="124" y="197" width="1" height="1" fill="#808080"/><rect x="124" y="199" width="1" height="1" fill="#808080"/><rect x="124" y="201" width="1" height="1" fill="#808080"/><rect x="124" y="203" width="1" height="1" fill="#808080"/><rect x="124" y="205" width="1" height="1" fill="#808080"/><rect x="124" y="207" width="1" height="1" fill="#808080"/><rect x="124" y="209" width="1" height="1" fill="#808080"/><rect x="124" y="211" width="1" height="1" fill="#808080"/><rect x="124" y="213" width="1" height="1" fill="#808080"/><rect x="124" y="215" width="1" height="1" fill="#808080"/><rect x="124" y="217" width="1" height="1" fill="#808080"/><rect x="130" y="41" width="1" height="1" fill="#808080"/><rect x="132" y="41" width="1" height="1" fill="#808080"/><rect x="134" y="41" width="1" height="1" fill="#808080"/><rect x="130" y="201" width="1" height="1" fill="#808080"/><rect x="132" y="201" width="1" height="1" fill="#808080"/><rect x="134" y="201" width="1" height="1" fill="#808080"/><rect x="130" y="217" width="1" height="1" fill="#808080"/><rect x="132" y="217" width="1" height="1" fill="#808080"/><rect x="134" y="217" width="1" height="1" fill="#808080"/><rect x="143" y="49" width="1" height="1" fill="#808080"/><rect x="143" y="51" width="1" height="1" fill="#808080"/><rect x="143" y="53" width="1" height="1" fill="#808080"/><rect x="143" y="55" width="1" height="1" fill="#808080"/><rect x="143" y="57" width="1" height="1" fill="#808080"/><rect x="143" y="59" width="1" height="1" fill="#808080"/><rect x="143" y="61" width="1" height="1" fill="#808080"/><rect x="143" y="63" width="1" height="1" fill="#808080"/><rect x="143" y="65" width="1" height="1" fill="#808080"/><rect x="143" y="67" width="1" height="1" fill="#808080"/><rect x="143" y="69" width="1" height="1" fill="#808080"/><rect x="143" y="71" width="1" height="1" fill="#808080"/><rect x="143" y="73" width="1" height="1" fill="#808080"/><rect x="150" y="57" width="1" height="1" fill="#808080"/><rect x="152" y="57" width="1" height="1" fill="#808080"/><rect x="154" y="57" width="1" height="1" fill="#808080"/><rect x="150" y="73" width="1" height="1" fill="#808080"/><rect x="152" y="73" width="1" height="1" fill="#808080"/><rect x="154" y="73" width="1" height="1" fill="#808080"/><rect x="162" y="81" width="1" height="1" fill="#808080"/><rect x="162" y="83" width="1" height="1" fill="#808080"/><rect x="162" y="85" width="1" height="1" fill="#808080"/><rect x="162" y="87" width="1" height="1" fill="#808080"/><rect x="162" y="89" width="1" height="1" fill="#808080"/><rect x="162" y="91" width="1" height="1" fill="#808080"/><rect x="162" y="93" width="1" height="1" fill="#808080"/><rect x="162" y="95" width="1" height="1" fill="#808080"/><rect x="162" y="97" width="1" height="1" fill="#808080"/><rect x="162" y="99" width="1" height="1" fill="#808080"/><rect x="162" y="101" width="1" height="1" fill="#808080"/><rect x="162" y="103" width="1" height="1" fill="#808080"/><rect x="162" y="105" width="1" height="1" fill="#808080"/><rect x="162" y="107" width="1" height="1" fill="#808080"/><rect x="162" y="109" width="1" height="1" fill="#808080"/><rect x="162" y="111" width="1" height="1" fill="#808080"/><rect x="162" y="113" width="1" height="1" fill="#808080"/><rect x="162" y="115" width="1" height="1" fill="#808080"/><rect x="162" y="117" width="1" height="1" fill="#808080"/><rect x="162" y="119" width="1" height="1" fill="#808080"/><rect x="162" y="121" width="1" height="1" fill="#808080"/><rect x="162" y="123" width="1" height="1" fill="#808080"/><rect x="162" y="125" width="1" height="1" fill="#808080"/><rect x="162" y="127" width="1" height="1" fill="#808080"/><rect x="162" y="129" width="1" height="1" fill="#808080"/><rect x="162" y="131" width="1" height="1" fill="#808080"/><rect x="162" y="133" width="1" height="1" fill="#808080"/><rect x="162" y="135" width="1" height="1" fill="#808080"/><rect x="162" y="137" width="1" height="1" fill="#808080"/><rect x="162" y="139" width="1" height="1" fill="#808080"/><rect x="162" y="141" width="1" height="1" fill="#808080"/><rect x="162" y="143" width="1" height="1" fill="#808080"/><rect x="162" y="145" width="1" height="1" fill="#808080"/><rect x="162" y="147" width="1" height="1" fill="#808080"/><rect x="162" y="149" width="1" height="1" fill="#808080"/><rect x="162" y="151" width="1" height="1" fill="#808080"/><rect x="162" y="153" width="1" height="1" fill="#808080"/><rect x="162" y="155" width="1" height="1" fill="#808080"/><rect x="162" y="157" width="1" height="1" fill="#808080"/><rect x="162" y="159" width="1" height="1" fill="#808080"/><rect x="162" y="161" width="1" height="1" fill="#808080"/><rect x="162" y="163" width="1" height="1" fill="#808080"/><rect x="162" y="165" width="1" height="1" fill="#808080"/><rect x="162" y="167" width="1" height="1" fill="#808080"/><rect x="162" y="169" width="1" height="1" fill="#808080"/><rect x="162" y="171" width="1" height="1" fill="#808080"/><rect x="162" y="173" width="1" height="1" fill="#808080"/><rect x="162" y="175" width="1" height="1" fill="#808080"/><rect x="162" y="177" width="1" height="1" fill="#808080"/><rect x="162" y="179" width="1" height="1" fill="#808080"/><rect x="162" y="181" width="1" height="1" fill="#808080"/><rect x="162" y="183" width="1" height="1" fill="#808080"/><rect x="162" y="185" width="1" height="1" fill="#808080"/><rect x="168" y="89" width="1" height="1" fill="#808080"/><rect x="170" y="89" width="1" height="1" fill="#808080"/><rect x="172" y="89" width="1" height="1" fill="#808080"/><rect x="174" y="89" width="1" height="1" fill="#808080"/><rect x="168" y="105" width="1" height="1" fill="#808080"/><rect x="170" y="105" width="1" height="1" fill="#808080"/><rect x="172" y="105" width="1" height="1" fill="#808080"/><rect x="174" y="105" width="1" height="1" fill="#808080"/><rect x="168" y="121" width="1" height="1" fill="#808080"/><rect x="170" y="121" width="1" height="1" fill="#808080"/><rect x="172" y="121" width="1" height="1" fill="#808080"/><rect x="174" y="121" width="1" height="1" fill="#808080"/><rect x="168" y="137" width="1" height="1" fill="#808080"/><rect x="170" y="137" width="1" height="1" fill="#808080"/><rect x="172" y="137" width="1" height="1" fill="#808080"/><rect x="174" y="137" width="1" height="1" fill="#808080"/><rect x="168" y="153" width="1" height="1" fill="#808080"/><rect x="170" y="153" width="1" height="1" fill="#808080"/><rect x="172" y="153" width="1" height="1" fill="#808080"/><rect x="174" y="153" width="1" height="1" fill="#808080"/><rect x="168" y="169" width="1" height="1" fill="#808080"/><rect x="170" y="169" width="1" height="1" fill="#808080"/><rect x="172" y="169" width="1" height="1" fill="#808080"/><rect x="174" y="169" width="1" height="1" fill="#808080"/><rect x="168" y="185" width="1" height="1" fill="#808080"/><rect x="170" y="185" width="1" height="1" fill="#808080"/><rect x="172" y="185" width="1" height="1" fill="#808080"/><rect x="120" y="37" width="9" height="9" fill="#808080"/><rect x="121" y="38" width="7" height="7" fill="#fff"/><rect x="122" y="41" width="5" height="1" fill="#000"/><rect x="139" y="53" width="9" height="9" fill="#808080"/><rect x="140" y="54" width="7" height="7" fill="#fff"/><rect x="141" y="57" width="5" height="1" fill="#000"/><rect x="143" y="55" width="1" height="5" fill="#000"/><rect x="139" y="69" width="9" height="9" fill="#808080"/><rect x="140" y="70" width="7" height="7" fill="#fff"/><rect x="141" y="73" width="5" height="1" fill="#000"/><rect x="158" y="85" width="9" height="9" fill="#808080"/><rect x="159" y="86" width="7" height="7" fill="#fff"/><rect x="160" y="89" width="5" height="1" fill="#000"/><rect x="162" y="87" width="1" height="5" fill="#000"/><rect x="158" y="101" width="9" height="9" fill="#808080"/><rect x="159" y="102" width="7" height="7" fill="#fff"/><rect x="160" y="105" width="5" height="1" fill="#000"/><rect x="162" y="103" width="1" height="5" fill="#000"/><rect x="158" y="117" width="9" height="9" fill="#808080"/><rect x="159" y="118" width="7" height="7" fill="#fff"/><rect x="160" y="121" width="5" height="1" fill="#000"/><rect x="162" y="119" width="1" height="5" fill="#000"/><rect x="158" y="133" width="9" height="9" fill="#808080"/><rect x="159" y="134" width="7" height="7" fill="#fff"/><rect x="160" y="137" width="5" height="1" fill="#000"/><rect x="162" y="135" width="1" height="5" fill="#000"/><rect x="158" y="149" width="9" height="9" fill="#808080"/><rect x="159" y="150" width="7" height="7" fill="#fff"/><rect x="160" y="153" width="5" height="1" fill="#000"/><rect x="162" y="151" width="1" height="5" fill="#000"/><rect x="158" y="165" width="9" height="9" fill="#808080"/><rect x="159" y="166" width="7" height="7" fill="#fff"/><rect x="160" y="169" width="5" height="1" fill="#000"/><rect x="162" y="167" width="1" height="5" fill="#000"/><rect x="158" y="181" width="9" height="9" fill="#808080"/><rect x="159" y="182" width="7" height="7" fill="#fff"/><rect x="160" y="185" width="5" height="1" fill="#000"/><rect x="162" y="183" width="1" height="5" fill="#000"/><rect x="157" y="51" width="11" height="11" fill="#808080"/><rect x="158" y="52" width="9" height="9" fill="#fff"/><path d="M159.5 55.5 L161.5 59 L170 50" stroke="#000" stroke-width="1.9" fill="none" shape-rendering="auto" stroke-linejoin="miter"/><rect x="157" y="67" width="11" height="11" fill="#808080"/><rect x="158" y="68" width="9" height="9" fill="#fff"/><path d="M159.5 71.5 L161.5 75 L170 66" stroke="#000" stroke-width="1.9" fill="none" shape-rendering="auto" stroke-linejoin="miter"/><rect x="176" y="83" width="11" height="11" fill="#808080"/><rect x="177" y="84" width="9" height="9" fill="#fff"/><path d="M178.5 87.5 L180.5 91 L189 82" stroke="#000" stroke-width="1.9" fill="none" shape-rendering="auto" stroke-linejoin="miter"/><rect x="176" y="99" width="11" height="11" fill="#808080"/><rect x="177" y="100" width="9" height="9" fill="#fff"/><path d="M178.5 103.5 L180.5 107 L189 98" stroke="#000" stroke-width="1.9" fill="none" shape-rendering="auto" stroke-linejoin="miter"/><rect x="176" y="115" width="11" height="11" fill="#808080"/><rect x="177" y="116" width="9" height="9" fill="#fff"/><path d="M178.5 119.5 L180.5 123 L189 114" stroke="#000" stroke-width="1.9" fill="none" shape-rendering="auto" stroke-linejoin="miter"/><rect x="176" y="131" width="11" height="11" fill="#808080"/><rect x="177" y="132" width="9" height="9" fill="#fff"/><path d="M178.5 135.5 L180.5 139 L189 130" stroke="#000" stroke-width="1.9" fill="none" shape-rendering="auto" stroke-linejoin="miter"/><rect x="176" y="147" width="11" height="11" fill="#808080"/><rect x="177" y="148" width="9" height="9" fill="#fff"/><path d="M178.5 151.5 L180.5 155 L189 146" stroke="#000" stroke-width="1.9" fill="none" shape-rendering="auto" stroke-linejoin="miter"/><rect x="176" y="163" width="11" height="11" fill="#808080"/><rect x="177" y="164" width="9" height="9" fill="#fff"/><path d="M178.5 167.5 L180.5 171 L189 162" stroke="#000" stroke-width="1.9" fill="none" shape-rendering="auto" stroke-linejoin="miter"/><defs><linearGradient id="pg" x1="0" y1="0" x2="1" y2="1"><stop offset="0" stop-color="#b000b0"/><stop offset="0.55" stop-color="#800080"/><stop offset="1" stop-color="#200050"/></linearGradient></defs><rect x="136" y="36" width="14" height="12" fill="url(#pg)"/><rect x="135" y="37" width="16" height="10" fill="url(#pg)"/><rect x="150" y="38" width="1" height="9" fill="#100020"/><rect x="136" y="47" width="14" height="1" fill="#100020"/><rect x="138" y="39" width="11" height="7" fill="#200030"/><rect x="138" y="39" width="7" height="2" fill="#ffc8ff"/><rect x="136" y="37" width="1" height="1" fill="#fff"/><rect x="138" y="37" width="1" height="1" fill="#fff"/><rect x="140" y="37" width="1" height="1" fill="#fff"/><rect x="142" y="37" width="1" height="1" fill="#fff"/><rect x="144" y="37" width="1" height="1" fill="#fff"/><rect x="146" y="37" width="1" height="1" fill="#fff"/><rect x="148" y="37" width="1" height="1" fill="#fff"/><rect x="136" y="37" width="1" height="1" fill="#fff"/><rect x="136" y="39" width="1" height="1" fill="#fff"/><rect x="136" y="41" width="1" height="1" fill="#fff"/><rect x="136" y="43" width="1" height="1" fill="#fff"/><rect x="136" y="45" width="1" height="1" fill="#fff"/><rect x="139" y="42" width="1" height="1" fill="#fff"/><rect x="141" y="42" width="1" height="1" fill="#fff"/><rect x="143" y="42" width="1" height="1" fill="#fff"/><rect x="145" y="42" width="1" height="1" fill="#fff"/><rect x="147" y="42" width="1" height="1" fill="#fff"/><rect x="139" y="44" width="1" height="1" fill="#fff"/><rect x="141" y="44" width="1" height="1" fill="#fff"/><rect x="143" y="44" width="1" height="1" fill="#fff"/><rect x="145" y="44" width="3" height="1" fill="#ffd0ff"/><rect x="170" y="49" width="16" height="15" fill="#808080"/><rect x="170" y="58" width="16" height="1" fill="#e0e0e0"/><rect x="170" y="59" width="16" height="5" fill="#000080"/><rect x="171" y="62" width="2" height="1" fill="#808080"/><rect x="174" y="56" width="1" height="2" fill="#000"/><rect x="176" y="54" width="1" height="4" fill="#000"/><rect x="179" y="51" width="1" height="7" fill="#000"/><rect x="182" y="55" width="1" height="3" fill="#000"/><rect x="173" y="58" width="1" height="1" fill="#000"/><rect x="176" y="59" width="1" height="1" fill="#000"/><rect x="178" y="59" width="1" height="1" fill="#000"/><rect x="181" y="59" width="1" height="1" fill="#000"/><rect x="183" y="59" width="1" height="1" fill="#000"/><rect x="171" y="50" width="2" height="2" fill="#ffff60"/><rect x="170" y="51" width="1" height="1" fill="#ffff90"/><rect x="172" y="49" width="1" height="1" fill="#ffff90"/><path d="M172 69 Q176 72.5 172 77 Z" fill="#ffff00" shape-rendering="auto"/><rect x="172" y="70" width="2" height="6" fill="#ffff00"/><rect x="174" y="71" width="1" height="4" fill="#ffff00"/><rect x="176" y="69" width="8" height="6" fill="#000080"/><rect x="177" y="71" width="1" height="3" fill="#fff"/><rect x="179" y="71" width="1" height="3" fill="#fff"/><rect x="181" y="71" width="1" height="3" fill="#fff"/><rect x="175" y="75" width="10" height="2" fill="#7070a0"/><rect x="190" y="81" width="1" height="1" fill="#000080"/><rect x="191" y="81" width="1" height="1" fill="#000080"/><rect x="192" y="82" width="1" height="1" fill="#000080"/><rect x="193" y="82" width="1" height="1" fill="#000080"/><rect x="194" y="81" width="1" height="1" fill="#000080"/><rect x="195" y="81" width="1" height="1" fill="#000080"/><rect x="196" y="82" width="1" height="1" fill="#000080"/><rect x="197" y="82" width="1" height="1" fill="#000080"/><rect x="198" y="81" width="1" height="1" fill="#000080"/><rect x="199" y="81" width="1" height="1" fill="#000080"/><rect x="200" y="82" width="1" height="1" fill="#000080"/><rect x="201" y="82" width="1" height="1" fill="#000080"/><rect x="202" y="81" width="1" height="1" fill="#000080"/><rect x="203" y="81" width="1" height="1" fill="#000080"/><rect x="197" y="82" width="1" height="6" fill="#006000"/><rect x="196" y="83" width="3" height="1" fill="#008000"/><rect x="195" y="84" width="1" height="1" fill="#006000"/><rect x="199" y="84" width="1" height="1" fill="#006000"/><rect x="196" y="87" width="3" height="3" fill="#000"/><rect x="197" y="90" width="1" height="2" fill="#300000"/><rect x="195" y="92" width="1" height="1" fill="#b00000"/><rect x="199" y="92" width="1" height="1" fill="#b00000"/><rect x="193" y="93" width="1" height="1" fill="#b00000"/><rect x="201" y="93" width="1" height="1" fill="#b00000"/><rect x="194" y="94" width="1" height="1" fill="#b00000"/><rect x="200" y="94" width="1" height="1" fill="#b00000"/><rect x="196" y="93" width="3" height="1" fill="#c00000"/><rect x="195" y="95" width="5" height="1" fill="#a00000"/><rect x="192" y="103" width="1" height="3" fill="#000"/><rect x="193" y="101" width="1" height="2" fill="#000"/><rect x="194" y="100" width="2" height="1" fill="#000"/><rect x="198" y="100" width="2" height="1" fill="#000"/><rect x="200" y="101" width="1" height="2" fill="#000"/><rect x="201" y="103" width="1" height="3" fill="#000"/><rect x="200" y="106" width="1" height="2" fill="#000"/><rect x="198" y="108" width="2" height="1" fill="#000"/><rect x="194" y="108" width="2" height="1" fill="#000"/><rect x="193" y="106" width="1" height="2" fill="#000"/><rect x="196" y="98" width="1" height="14" fill="#000"/><rect x="197" y="100" width="1" height="1" fill="#000"/><rect x="197" y="109" width="1" height="1" fill="#000"/><rect x="191" y="110" width="1" height="1" fill="#000080"/><rect x="192" y="109" width="1" height="1" fill="#2020c0"/><rect x="193" y="108" width="1" height="1" fill="#000080"/><rect x="194" y="107" width="1" height="1" fill="#2020c0"/><rect x="195" y="106" width="1" height="1" fill="#000080"/><rect x="196" y="105" width="1" height="1" fill="#2020c0"/><rect x="197" y="104" width="1" height="1" fill="#000080"/><rect x="198" y="103" width="1" height="1" fill="#2020c0"/><rect x="199" y="102" width="1" height="1" fill="#000080"/><rect x="200" y="101" width="1" height="1" fill="#2020c0"/><rect x="201" y="100" width="1" height="1" fill="#000080"/><rect x="200" y="99" width="4" height="1" fill="#0000c0"/><rect x="202" y="99" width="2" height="3" fill="#0000c0"/><rect x="201" y="100" width="2" height="1" fill="#0000c0"/><rect x="193" y="107" width="2" height="2" fill="#000060"/><rect x="193" y="106" width="1" height="1" fill="#000060"/><rect x="189" y="120" width="16" height="1" fill="#000"/><rect x="197" y="113" width="1" height="14" fill="#000"/><rect x="196" y="119" width="3" height="3" fill="#000"/><rect x="193" y="124" width="1" height="1" fill="#000"/><rect x="195" y="122" width="1" height="1" fill="#000"/><rect x="197" y="120" width="1" height="1" fill="#000"/><rect x="199" y="118" width="1" height="1" fill="#000"/><rect x="201" y="116" width="1" height="1" fill="#000"/><rect x="203" y="114" width="1" height="1" fill="#000"/><rect x="191" y="118" width="1" height="1" fill="#900000"/><rect x="190" y="119" width="1" height="1" fill="#900000"/><rect x="192" y="119" width="1" height="1" fill="#900000"/><rect x="189" y="120" width="1" height="1" fill="#900000"/><rect x="193" y="120" width="1" height="1" fill="#900000"/><rect x="190" y="121" width="1" height="1" fill="#900000"/><rect x="192" y="121" width="1" height="1" fill="#900000"/><rect x="191" y="122" width="1" height="1" fill="#900000"/><rect x="191" y="120" width="1" height="1" fill="#ffffff"/><rect x="191" y="123" width="1" height="1" fill="#900000"/><rect x="190" y="124" width="1" height="1" fill="#900000"/><rect x="192" y="124" width="1" height="1" fill="#900000"/><rect x="189" y="125" width="1" height="1" fill="#900000"/><rect x="193" y="125" width="1" height="1" fill="#900000"/><rect x="190" y="126" width="1" height="1" fill="#900000"/><rect x="192" y="126" width="1" height="1" fill="#900000"/><rect x="191" y="127" width="1" height="1" fill="#900000"/><rect x="191" y="125" width="1" height="1" fill="#ffffff"/><rect x="197" y="124" width="1" height="1" fill="#900000"/><rect x="196" y="125" width="1" height="1" fill="#900000"/><rect x="198" y="125" width="1" height="1" fill="#900000"/><rect x="195" y="126" width="1" height="1" fill="#900000"/><rect x="199" y="126" width="1" height="1" fill="#900000"/><rect x="196" y="127" width="1" height="1" fill="#900000"/><rect x="198" y="127" width="1" height="1" fill="#900000"/><rect x="197" y="128" width="1" height="1" fill="#900000"/><rect x="197" y="126" width="1" height="1" fill="#ffffff"/><rect x="190" y="130" width="15" height="1" fill="#a09040"/><rect x="195" y="129" width="4" height="3" fill="#a08030"/><rect x="194" y="132" width="1" height="1" fill="#800000"/><rect x="193" y="133" width="1" height="1" fill="#800000"/><rect x="192" y="134" width="1" height="1" fill="#800000"/><rect x="191" y="134" width="1" height="1" fill="#800000"/><rect x="190" y="135" width="1" height="1" fill="#800000"/><rect x="189" y="136" width="1" height="1" fill="#800000"/><rect x="195" y="132" width="1" height="1" fill="#800000"/><rect x="194" y="133" width="1" height="1" fill="#800000"/><rect x="194" y="134" width="1" height="1" fill="#800000"/><rect x="193" y="135" width="1" height="1" fill="#800000"/><rect x="193" y="136" width="1" height="1" fill="#800000"/><rect x="192" y="137" width="1" height="1" fill="#800000"/><rect x="192" y="138" width="1" height="1" fill="#800000"/><rect x="191" y="139" width="1" height="1" fill="#800000"/><rect x="191" y="140" width="1" height="1" fill="#800000"/><rect x="190" y="141" width="1" height="1" fill="#800000"/><rect x="190" y="142" width="1" height="1" fill="#800000"/><rect x="189" y="143" width="1" height="1" fill="#800000"/><rect x="196" y="133" width="1" height="1" fill="#800000"/><rect x="196" y="134" width="1" height="1" fill="#800000"/><rect x="195" y="135" width="1" height="1" fill="#800000"/><rect x="195" y="136" width="1" height="1" fill="#800000"/><rect x="194" y="137" width="1" height="1" fill="#800000"/><rect x="194" y="138" width="1" height="1" fill="#800000"/><rect x="194" y="139" width="1" height="1" fill="#800000"/><rect x="193" y="140" width="1" height="1" fill="#800000"/><rect x="193" y="141" width="1" height="1" fill="#800000"/><rect x="192" y="142" width="1" height="1" fill="#800000"/><rect x="192" y="143" width="1" height="1" fill="#800000"/><rect x="197" y="134" width="1" height="1" fill="#800000"/><rect x="197" y="135" width="1" height="1" fill="#800000"/><rect x="197" y="136" width="1" height="1" fill="#800000"/><rect x="197" y="137" width="1" height="1" fill="#800000"/><rect x="197" y="138" width="1" height="1" fill="#800000"/><rect x="197" y="139" width="1" height="1" fill="#800000"/><rect x="197" y="140" width="1" height="1" fill="#800000"/><rect x="197" y="141" width="1" height="1" fill="#800000"/><rect x="197" y="142" width="1" height="1" fill="#800000"/><rect x="197" y="143" width="1" height="1" fill="#800000"/><rect x="198" y="133" width="1" height="1" fill="#800000"/><rect x="198" y="134" width="1" height="1" fill="#800000"/><rect x="199" y="135" width="1" height="1" fill="#800000"/><rect x="199" y="136" width="1" height="1" fill="#800000"/><rect x="199" y="137" width="1" height="1" fill="#800000"/><rect x="200" y="138" width="1" height="1" fill="#800000"/><rect x="200" y="139" width="1" height="1" fill="#800000"/><rect x="200" y="140" width="1" height="1" fill="#800000"/><rect x="200" y="141" width="1" height="1" fill="#800000"/><rect x="201" y="142" width="1" height="1" fill="#800000"/><rect x="201" y="143" width="1" height="1" fill="#800000"/><rect x="199" y="132" width="1" height="1" fill="#800000"/><rect x="199" y="133" width="1" height="1" fill="#800000"/><rect x="200" y="134" width="1" height="1" fill="#800000"/><rect x="200" y="135" width="1" height="1" fill="#800000"/><rect x="201" y="136" width="1" height="1" fill="#800000"/><rect x="201" y="137" width="1" height="1" fill="#800000"/><rect x="202" y="138" width="1" height="1" fill="#800000"/><rect x="202" y="139" width="1" height="1" fill="#800000"/><rect x="203" y="140" width="1" height="1" fill="#800000"/><rect x="203" y="141" width="1" height="1" fill="#800000"/><rect x="204" y="142" width="1" height="1" fill="#800000"/><rect x="204" y="143" width="1" height="1" fill="#800000"/><rect x="200" y="132" width="1" height="1" fill="#800000"/><rect x="201" y="133" width="1" height="1" fill="#800000"/><rect x="202" y="134" width="1" height="1" fill="#800000"/><rect x="203" y="134" width="1" height="1" fill="#800000"/><rect x="204" y="135" width="1" height="1" fill="#800000"/><rect x="205" y="136" width="1" height="1" fill="#800000"/><rect x="195" y="131" width="5" height="2" fill="#800000"/><rect x="190" y="146" width="15" height="1" fill="#a09040"/><rect x="195" y="145" width="4" height="3" fill="#a08030"/><rect x="194" y="148" width="1" height="1" fill="#800000"/><rect x="193" y="149" width="1" height="1" fill="#800000"/><rect x="192" y="150" width="1" height="1" fill="#800000"/><rect x="191" y="150" width="1" height="1" fill="#800000"/><rect x="190" y="151" width="1" height="1" fill="#800000"/><rect x="189" y="152" width="1" height="1" fill="#800000"/><rect x="195" y="148" width="1" height="1" fill="#800000"/><rect x="194" y="149" width="1" height="1" fill="#800000"/><rect x="194" y="150" width="1" height="1" fill="#800000"/><rect x="193" y="151" width="1" height="1" fill="#800000"/><rect x="193" y="152" width="1" height="1" fill="#800000"/><rect x="192" y="153" width="1" height="1" fill="#800000"/><rect x="192" y="154" width="1" height="1" fill="#800000"/><rect x="191" y="155" width="1" height="1" fill="#800000"/><rect x="191" y="156" width="1" height="1" fill="#800000"/><rect x="190" y="157" width="1" height="1" fill="#800000"/><rect x="190" y="158" width="1" height="1" fill="#800000"/><rect x="189" y="159" width="1" height="1" fill="#800000"/><rect x="196" y="149" width="1" height="1" fill="#800000"/><rect x="196" y="150" width="1" height="1" fill="#800000"/><rect x="195" y="151" width="1" height="1" fill="#800000"/><rect x="195" y="152" width="1" height="1" fill="#800000"/><rect x="194" y="153" width="1" height="1" fill="#800000"/><rect x="194" y="154" width="1" height="1" fill="#800000"/><rect x="194" y="155" width="1" height="1" fill="#800000"/><rect x="193" y="156" width="1" height="1" fill="#800000"/><rect x="193" y="157" width="1" height="1" fill="#800000"/><rect x="192" y="158" width="1" height="1" fill="#800000"/><rect x="192" y="159" width="1" height="1" fill="#800000"/><rect x="197" y="150" width="1" height="1" fill="#800000"/><rect x="197" y="151" width="1" height="1" fill="#800000"/><rect x="197" y="152" width="1" height="1" fill="#800000"/><rect x="197" y="153" width="1" height="1" fill="#800000"/><rect x="197" y="154" width="1" height="1" fill="#800000"/><rect x="197" y="155" width="1" height="1" fill="#800000"/><rect x="197" y="156" width="1" height="1" fill="#800000"/><rect x="197" y="157" width="1" height="1" fill="#800000"/><rect x="197" y="158" width="1" height="1" fill="#800000"/><rect x="197" y="159" width="1" height="1" fill="#800000"/><rect x="198" y="149" width="1" height="1" fill="#800000"/><rect x="198" y="150" width="1" height="1" fill="#800000"/><rect x="199" y="151" width="1" height="1" fill="#800000"/><rect x="199" y="152" width="1" height="1" fill="#800000"/><rect x="199" y="153" width="1" height="1" fill="#800000"/><rect x="200" y="154" width="1" height="1" fill="#800000"/><rect x="200" y="155" width="1" height="1" fill="#800000"/><rect x="200" y="156" width="1" height="1" fill="#800000"/><rect x="200" y="157" width="1" height="1" fill="#800000"/><rect x="201" y="158" width="1" height="1" fill="#800000"/><rect x="201" y="159" width="1" height="1" fill="#800000"/><rect x="199" y="148" width="1" height="1" fill="#800000"/><rect x="199" y="149" width="1" height="1" fill="#800000"/><rect x="200" y="150" width="1" height="1" fill="#800000"/><rect x="200" y="151" width="1" height="1" fill="#800000"/><rect x="201" y="152" width="1" height="1" fill="#800000"/><rect x="201" y="153" width="1" height="1" fill="#800000"/><rect x="202" y="154" width="1" height="1" fill="#800000"/><rect x="202" y="155" width="1" height="1" fill="#800000"/><rect x="203" y="156" width="1" height="1" fill="#800000"/><rect x="203" y="157" width="1" height="1" fill="#800000"/><rect x="204" y="158" width="1" height="1" fill="#800000"/><rect x="204" y="159" width="1" height="1" fill="#800000"/><rect x="200" y="148" width="1" height="1" fill="#800000"/><rect x="201" y="149" width="1" height="1" fill="#800000"/><rect x="202" y="150" width="1" height="1" fill="#800000"/><rect x="203" y="150" width="1" height="1" fill="#800000"/><rect x="204" y="151" width="1" height="1" fill="#800000"/><rect x="205" y="152" width="1" height="1" fill="#800000"/><rect x="195" y="147" width="5" height="2" fill="#800000"/><rect x="190" y="162" width="15" height="1" fill="#a09040"/><rect x="195" y="161" width="4" height="3" fill="#a08030"/><rect x="194" y="164" width="1" height="1" fill="#800000"/><rect x="193" y="165" width="1" height="1" fill="#800000"/><rect x="192" y="166" width="1" height="1" fill="#800000"/><rect x="191" y="166" width="1" height="1" fill="#800000"/><rect x="190" y="167" width="1" height="1" fill="#800000"/><rect x="189" y="168" width="1" height="1" fill="#800000"/><rect x="195" y="164" width="1" height="1" fill="#800000"/><rect x="194" y="165" width="1" height="1" fill="#800000"/><rect x="194" y="166" width="1" height="1" fill="#800000"/><rect x="193" y="167" width="1" height="1" fill="#800000"/><rect x="193" y="168" width="1" height="1" fill="#800000"/><rect x="192" y="169" width="1" height="1" fill="#800000"/><rect x="192" y="170" width="1" height="1" fill="#800000"/><rect x="191" y="171" width="1" height="1" fill="#800000"/><rect x="191" y="172" width="1" height="1" fill="#800000"/><rect x="190" y="173" width="1" height="1" fill="#800000"/><rect x="190" y="174" width="1" height="1" fill="#800000"/><rect x="189" y="175" width="1" height="1" fill="#800000"/><rect x="196" y="165" width="1" height="1" fill="#800000"/><rect x="196" y="166" width="1" height="1" fill="#800000"/><rect x="195" y="167" width="1" height="1" fill="#800000"/><rect x="195" y="168" width="1" height="1" fill="#800000"/><rect x="194" y="169" width="1" height="1" fill="#800000"/><rect x="194" y="170" width="1" height="1" fill="#800000"/><rect x="194" y="171" width="1" height="1" fill="#800000"/><rect x="193" y="172" width="1" height="1" fill="#800000"/><rect x="193" y="173" width="1" height="1" fill="#800000"/><rect x="192" y="174" width="1" height="1" fill="#800000"/><rect x="192" y="175" width="1" height="1" fill="#800000"/><rect x="197" y="166" width="1" height="1" fill="#800000"/><rect x="197" y="167" width="1" height="1" fill="#800000"/><rect x="197" y="168" width="1" height="1" fill="#800000"/><rect x="197" y="169" width="1" height="1" fill="#800000"/><rect x="197" y="170" width="1" height="1" fill="#800000"/><rect x="197" y="171" width="1" height="1" fill="#800000"/><rect x="197" y="172" width="1" height="1" fill="#800000"/><rect x="197" y="173" width="1" height="1" fill="#800000"/><rect x="197" y="174" width="1" height="1" fill="#800000"/><rect x="197" y="175" width="1" height="1" fill="#800000"/><rect x="198" y="165" width="1" height="1" fill="#800000"/><rect x="198" y="166" width="1" height="1" fill="#800000"/><rect x="199" y="167" width="1" height="1" fill="#800000"/><rect x="199" y="168" width="1" height="1" fill="#800000"/><rect x="199" y="169" width="1" height="1" fill="#800000"/><rect x="200" y="170" width="1" height="1" fill="#800000"/><rect x="200" y="171" width="1" height="1" fill="#800000"/><rect x="200" y="172" width="1" height="1" fill="#800000"/><rect x="200" y="173" width="1" height="1" fill="#800000"/><rect x="201" y="174" width="1" height="1" fill="#800000"/><rect x="201" y="175" width="1" height="1" fill="#800000"/><rect x="199" y="164" width="1" height="1" fill="#800000"/><rect x="199" y="165" width="1" height="1" fill="#800000"/><rect x="200" y="166" width="1" height="1" fill="#800000"/><rect x="200" y="167" width="1" height="1" fill="#800000"/><rect x="201" y="168" width="1" height="1" fill="#800000"/><rect x="201" y="169" width="1" height="1" fill="#800000"/><rect x="202" y="170" width="1" height="1" fill="#800000"/><rect x="202" y="171" width="1" height="1" fill="#800000"/><rect x="203" y="172" width="1" height="1" fill="#800000"/><rect x="203" y="173" width="1" height="1" fill="#800000"/><rect x="204" y="174" width="1" height="1" fill="#800000"/><rect x="204" y="175" width="1" height="1" fill="#800000"/><rect x="200" y="164" width="1" height="1" fill="#800000"/><rect x="201" y="165" width="1" height="1" fill="#800000"/><rect x="202" y="166" width="1" height="1" fill="#800000"/><rect x="203" y="166" width="1" height="1" fill="#800000"/><rect x="204" y="167" width="1" height="1" fill="#800000"/><rect x="205" y="168" width="1" height="1" fill="#800000"/><rect x="195" y="163" width="5" height="2" fill="#800000"/><rect x="181" y="177" width="1" height="14" fill="#808080"/><rect x="174" y="183" width="15" height="1" fill="#808080"/><circle cx="180" cy="185.5" r="2" stroke="#900000" stroke-width="0.8" fill="none" shape-rendering="auto"/><rect x="179" y="186" width="1" height="1" fill="#900000"/><rect x="180" y="185" width="1" height="1" fill="#c04040"/><rect x="177" y="177" width="1" height="15" fill="#000"/><rect x="173" y="187" width="16" height="1" fill="#000"/><rect x="137" y="196" width="5" height="9" fill="#000"/><rect x="138" y="197" width="3" height="7" fill="#fff"/><rect x="142" y="199" width="6" height="3" fill="#c00000"/><rect x="143" y="200" width="1" height="1" fill="#ffffff"/><rect x="145" y="200" width="1" height="1" fill="#ffffff"/><rect x="147" y="200" width="1" height="1" fill="#ffffff"/><path d="M146 197 L150 200.5 L146 204" stroke="#c00000" stroke-width="1.4" fill="none" shape-rendering="auto"/><rect x="137" y="212" width="5" height="9" fill="#000"/><rect x="138" y="213" width="3" height="7" fill="#fff"/><rect x="142" y="215" width="6" height="3" fill="#c00000"/><rect x="143" y="216" width="1" height="1" fill="#ffffff"/><rect x="145" y="216" width="1" height="1" fill="#ffffff"/><rect x="147" y="216" width="1" height="1" fill="#ffffff"/><path d="M146 213 L150 216.5 L146 220" stroke="#c00000" stroke-width="1.4" fill="none" shape-rendering="auto"/><rect x="338" y="220" width="1" height="1" fill="#000"/><rect x="337" y="221" width="1" height="1" fill="#000"/><rect x="338" y="221" width="1" height="1" fill="#000"/><rect x="332" y="222" width="1" height="1" fill="#000"/><rect x="336" y="222" width="1" height="1" fill="#000"/><rect x="337" y="222" width="1" height="1" fill="#000"/><rect x="338" y="222" width="1" height="1" fill="#000"/><rect x="332" y="223" width="1" height="1" fill="#000"/><rect x="333" y="223" width="1" height="1" fill="#000"/><rect x="335" y="223" width="1" height="1" fill="#000"/><rect x="336" y="223" width="1" height="1" fill="#000"/><rect x="337" y="223" width="1" height="1" fill="#000"/><rect x="332" y="224" width="1" height="1" fill="#000"/><rect x="333" y="224" width="1" height="1" fill="#000"/><rect x="334" y="224" width="1" height="1" fill="#000"/><rect x="335" y="224" width="1" height="1" fill="#000"/><rect x="336" y="224" width="1" height="1" fill="#000"/><rect x="333" y="225" width="1" height="1" fill="#000"/><rect x="334" y="225" width="1" height="1" fill="#000"/><rect x="335" y="225" width="1" height="1" fill="#000"/><rect x="334" y="226" width="1" height="1" fill="#000"/><rect x="338" y="237" width="1" height="1" fill="#000"/><rect x="337" y="238" width="1" height="1" fill="#000"/><rect x="338" y="238" width="1" height="1" fill="#000"/><rect x="332" y="239" width="1" height="1" fill="#000"/><rect x="336" y="239" width="1" height="1" fill="#000"/><rect x="337" y="239" width="1" height="1" fill="#000"/><rect x="338" y="239" width="1" height="1" fill="#000"/><rect x="332" y="240" width="1" height="1" fill="#000"/><rect x="333" y="240" width="1" height="1" fill="#000"/><rect x="335" y="240" width="1" height="1" fill="#000"/><rect x="336" y="240" width="1" height="1" fill="#000"/><rect x="337" y="240" width="1" height="1" fill="#000"/><rect x="332" y="241" width="1" height="1" fill="#000"/><rect x="333" y="241" width="1" height="1" fill="#000"/><rect x="334" y="241" width="1" height="1" fill="#000"/><rect x="335" y="241" width="1" height="1" fill="#000"/><rect x="336" y="241" width="1" height="1" fill="#000"/><rect x="333" y="242" width="1" height="1" fill="#000"/><rect x="334" y="242" width="1" height="1" fill="#000"/><rect x="335" y="242" width="1" height="1" fill="#000"/><rect x="334" y="243" width="1" height="1" fill="#000"/><rect x="38" y="69" width="31" height="21" fill="#009030"/><rect x="38" y="70" width="1" height="19" fill="#005010"/><rect x="39" y="69" width="29" height="1" fill="#005010"/><rect x="39" y="70" width="2" height="18" fill="#40d060"/><rect x="39" y="70" width="28" height="1" fill="#30b050"/><rect x="41" y="71" width="25" height="17" fill="#000"/><rect x="42" y="72" width="11" height="3" fill="#e0f8e0"/><rect x="45" y="76" width="1" height="11" fill="#007020"/><rect x="49" y="76" width="1" height="11" fill="#007020"/><rect x="53" y="76" width="1" height="11" fill="#007020"/><rect x="57" y="76" width="1" height="11" fill="#007020"/><rect x="61" y="76" width="1" height="11" fill="#007020"/><rect x="65" y="76" width="1" height="11" fill="#007020"/><rect x="42" y="79" width="24" height="1" fill="#007020"/><rect x="42" y="83" width="24" height="1" fill="#007020"/><rect x="42" y="87" width="24" height="1" fill="#007020"/><rect x="42" y="76" width="2" height="2" fill="#ffffff"/><rect x="46" y="76" width="2" height="2" fill="#ffffff"/><rect x="50" y="76" width="2" height="2" fill="#ffffff"/><rect x="54" y="76" width="2" height="2" fill="#ffffff"/><rect x="58" y="76" width="2" height="2" fill="#ffffff"/><rect x="62" y="76" width="2" height="2" fill="#ffffff"/><rect x="42" y="80" width="2" height="2" fill="#ffffff"/><rect x="46" y="80" width="2" height="2" fill="#ffffff"/><rect x="50" y="80" width="2" height="2" fill="#ffffff"/><rect x="54" y="80" width="2" height="2" fill="#ffffff"/><rect x="58" y="80" width="2" height="2" fill="#ffffff"/><rect x="62" y="80" width="2" height="2" fill="#ffffff"/><rect x="42" y="84" width="2" height="2" fill="#ffffff"/><rect x="46" y="84" width="2" height="2" fill="#ffffff"/><rect x="50" y="84" width="2" height="2" fill="#ffffff"/><rect x="54" y="84" width="2" height="2" fill="#ffffff"/><rect x="58" y="84" width="7" height="2" fill="#e0f8e0"/><rect x="61" y="84" width="1" height="3" fill="#e0f8e0"/><rect x="67" y="70" width="2" height="19" fill="#000"/><rect x="39" y="88" width="30" height="2" fill="#200000"/><path d="M60.0 67.0L67.0 67.0M59.7 68.0L64.1 70.5M59.0 68.7L62.5 74.8M58.0 69.0L58.0 74.0M57.0 68.7L53.5 74.8M56.3 68.0L51.9 70.5M56.0 67.0L49.0 67.0M56.3 66.0L51.9 63.5M57.0 65.3L53.5 59.2M58.0 65.0L58.0 60.0M59.0 65.3L62.5 59.2M59.7 66.0L64.1 63.5" stroke="#f0f060" stroke-width="1.3" fill="none" shape-rendering="auto"/><circle cx="58" cy="67" r="1.5" fill="#ffffe0" shape-rendering="auto"/><rect x="37" y="133" width="31" height="21" fill="#009030"/><rect x="37" y="134" width="1" height="19" fill="#005010"/><rect x="38" y="133" width="29" height="1" fill="#005010"/><rect x="38" y="134" width="2" height="18" fill="#40d060"/><rect x="38" y="134" width="28" height="1" fill="#30b050"/><rect x="40" y="135" width="25" height="17" fill="#000"/><rect x="41" y="136" width="11" height="3" fill="#e0f8e0"/><rect x="44" y="140" width="1" height="11" fill="#007020"/><rect x="48" y="140" width="1" height="11" fill="#007020"/><rect x="52" y="140" width="1" height="11" fill="#007020"/><rect x="56" y="140" width="1" height="11" fill="#007020"/><rect x="60" y="140" width="1" height="11" fill="#007020"/><rect x="64" y="140" width="1" height="11" fill="#007020"/><rect x="41" y="143" width="24" height="1" fill="#007020"/><rect x="41" y="147" width="24" height="1" fill="#007020"/><rect x="41" y="151" width="24" height="1" fill="#007020"/><rect x="41" y="140" width="2" height="2" fill="#ffffff"/><rect x="45" y="140" width="2" height="2" fill="#ffffff"/><rect x="49" y="140" width="2" height="2" fill="#ffffff"/><rect x="53" y="140" width="2" height="2" fill="#ffffff"/><rect x="57" y="140" width="2" height="2" fill="#ffffff"/><rect x="61" y="140" width="2" height="2" fill="#ffffff"/><rect x="41" y="144" width="2" height="2" fill="#ffffff"/><rect x="45" y="144" width="2" height="2" fill="#ffffff"/><rect x="49" y="144" width="2" height="2" fill="#ffffff"/><rect x="53" y="144" width="2" height="2" fill="#ffffff"/><rect x="57" y="144" width="2" height="2" fill="#ffffff"/><rect x="61" y="144" width="2" height="2" fill="#ffffff"/><rect x="41" y="148" width="2" height="2" fill="#ffffff"/><rect x="45" y="148" width="2" height="2" fill="#ffffff"/><rect x="49" y="148" width="2" height="2" fill="#ffffff"/><rect x="53" y="148" width="2" height="2" fill="#ffffff"/><rect x="57" y="148" width="7" height="2" fill="#e0f8e0"/><rect x="60" y="148" width="1" height="3" fill="#e0f8e0"/><rect x="66" y="134" width="2" height="19" fill="#000"/><rect x="38" y="152" width="30" height="2" fill="#200000"/><rect x="47" y="124" width="22" height="16" fill="#00a020"/><rect x="47" y="124" width="22" height="1" fill="#40e060"/><rect x="47" y="124" width="1" height="16" fill="#40e060"/><rect x="48" y="126" width="1" height="1" fill="#ffffff"/><rect x="50" y="126" width="1" height="1" fill="#ffffff"/><rect x="52" y="126" width="1" height="1" fill="#ffffff"/><rect x="54" y="126" width="1" height="1" fill="#ffffff"/><rect x="56" y="126" width="1" height="1" fill="#ffffff"/><rect x="58" y="126" width="1" height="1" fill="#ffffff"/><rect x="60" y="126" width="1" height="1" fill="#ffffff"/><rect x="62" y="126" width="1" height="1" fill="#ffffff"/><rect x="64" y="126" width="1" height="1" fill="#ffffff"/><rect x="66" y="126" width="1" height="1" fill="#ffffff"/><rect x="48" y="128" width="1" height="1" fill="#ffffff"/><rect x="48" y="130" width="1" height="1" fill="#ffffff"/><rect x="48" y="132" width="1" height="1" fill="#ffffff"/><rect x="48" y="134" width="1" height="1" fill="#ffffff"/><rect x="48" y="136" width="1" height="1" fill="#ffffff"/><rect x="51" y="128" width="10" height="3" fill="#000"/><rect x="52" y="129" width="9" height="2" fill="#e8ffe8"/><rect x="52" y="133" width="3" height="1" fill="#ffffff"/><rect x="52" y="134" width="3" height="1" fill="#003000"/><rect x="56" y="133" width="3" height="1" fill="#ffffff"/><rect x="56" y="134" width="3" height="1" fill="#003000"/><rect x="60" y="133" width="3" height="1" fill="#ffffff"/><rect x="60" y="134" width="3" height="1" fill="#003000"/><rect x="64" y="133" width="3" height="1" fill="#ffffff"/><rect x="64" y="134" width="3" height="1" fill="#003000"/><rect x="52" y="136" width="3" height="1" fill="#ffffff"/><rect x="52" y="137" width="3" height="1" fill="#003000"/><rect x="56" y="136" width="3" height="1" fill="#ffffff"/><rect x="56" y="137" width="3" height="1" fill="#003000"/><rect x="60" y="136" width="3" height="1" fill="#ffffff"/><rect x="60" y="137" width="3" height="1" fill="#003000"/><rect x="64" y="136" width="3" height="1" fill="#ffffff"/><rect x="64" y="137" width="3" height="1" fill="#003000"/><rect x="67" y="125" width="2" height="15" fill="#800000"/><rect x="49" y="138" width="20" height="2" fill="#604000"/><rect x="38" y="197" width="31" height="21" fill="#009030"/><rect x="38" y="198" width="1" height="19" fill="#005010"/><rect x="39" y="197" width="29" height="1" fill="#005010"/><rect x="39" y="198" width="2" height="18" fill="#40d060"/><rect x="39" y="198" width="28" height="1" fill="#30b050"/><rect x="41" y="199" width="25" height="17" fill="#000"/><rect x="42" y="200" width="11" height="3" fill="#e0f8e0"/><rect x="45" y="204" width="1" height="11" fill="#007020"/><rect x="49" y="204" width="1" height="11" fill="#007020"/><rect x="53" y="204" width="1" height="11" fill="#007020"/><rect x="57" y="204" width="1" height="11" fill="#007020"/><rect x="61" y="204" width="1" height="11" fill="#007020"/><rect x="65" y="204" width="1" height="11" fill="#007020"/><rect x="42" y="207" width="24" height="1" fill="#007020"/><rect x="42" y="211" width="24" height="1" fill="#007020"/><rect x="42" y="215" width="24" height="1" fill="#007020"/><rect x="42" y="204" width="2" height="2" fill="#ffffff"/><rect x="46" y="204" width="2" height="2" fill="#ffffff"/><rect x="50" y="204" width="2" height="2" fill="#ffffff"/><rect x="54" y="204" width="2" height="2" fill="#ffffff"/><rect x="58" y="204" width="2" height="2" fill="#ffffff"/><rect x="62" y="204" width="2" height="2" fill="#ffffff"/><rect x="42" y="208" width="2" height="2" fill="#ffffff"/><rect x="46" y="208" width="2" height="2" fill="#ffffff"/><rect x="50" y="208" width="2" height="2" fill="#ffffff"/><rect x="54" y="208" width="2" height="2" fill="#ffffff"/><rect x="58" y="208" width="2" height="2" fill="#ffffff"/><rect x="62" y="208" width="2" height="2" fill="#ffffff"/><rect x="42" y="212" width="2" height="2" fill="#ffffff"/><rect x="46" y="212" width="2" height="2" fill="#ffffff"/><rect x="50" y="212" width="2" height="2" fill="#ffffff"/><rect x="54" y="212" width="2" height="2" fill="#ffffff"/><rect x="58" y="212" width="7" height="2" fill="#e0f8e0"/><rect x="61" y="212" width="1" height="3" fill="#e0f8e0"/><rect x="67" y="198" width="2" height="19" fill="#000"/><rect x="39" y="216" width="30" height="2" fill="#200000"/><path d="M50 195 L65 207 M66 191 L50 208" stroke="#e00020" stroke-width="3" fill="none" shape-rendering="auto"/><path d="M49 193.5 L52 195.5 M63 190 L67 191" stroke="#ff80c0" stroke-width="1" fill="none" shape-rendering="auto"/><rect x="5" y="4" width="11" height="14" fill="#6aa0e8"/><rect x="5" y="4" width="1" height="14" fill="#a8d0ff"/><rect x="6" y="4" width="10" height="3" fill="#80e0a0"/><rect x="8" y="8" width="1" height="2" fill="#e0f0ff"/><rect x="10" y="8" width="1" height="2" fill="#e0f0ff"/><rect x="12" y="8" width="1" height="2" fill="#e0f0ff"/><rect x="8" y="11" width="1" height="2" fill="#e0f0ff"/><rect x="10" y="11" width="1" height="2" fill="#e0f0ff"/><rect x="12" y="11" width="1" height="2" fill="#e0f0ff"/><rect x="8" y="14" width="1" height="2" fill="#e0f0ff"/><rect x="10" y="14" width="1" height="2" fill="#e0f0ff"/><rect x="12" y="14" width="1" height="2" fill="#e0f0ff"/><rect x="7" y="8" width="2" height="2" fill="#c06060"/><rect x="11" y="15" width="5" height="3" fill="#ffffff"/><rect x="12" y="14" width="3" height="1" fill="#4070c0"/><rect x="15" y="10" width="2" height="4" fill="#4070c0"/></svg>
<span style="left:20.50px;top:6px;font:bold 12px 'Liberation Sans', sans-serif;line-height:12px;letter-spacing:-0.041px;color:#fff;">Computation Setup</span>
<span style="left:20.50px;top:38px;font:12px 'Liberation Sans', sans-serif;line-height:12px;letter-spacing:-0.150px;color:#000;transform:scaleX(0.8840);transform-origin:0 0;">Computations</span>
<span style="left:30.50px;top:601px;font:12px 'Liberation Sans', sans-serif;line-height:12px;letter-spacing:-0.150px;color:#000;transform:scaleX(0.8888);transform-origin:0 0;">Shortcuts</span>
<span style="left:11.50px;top:95px;font:12px 'Liberation Sans', sans-serif;line-height:12px;letter-spacing:-0.150px;color:#000;transform:scaleX(0.8790);transform-origin:0 0;">New Computation</span>
<span style="left:8.50px;top:159px;font:12px 'Liberation Sans', sans-serif;line-height:12px;letter-spacing:-0.150px;color:#000;transform:scaleX(0.8853);transform-origin:0 0;">Copy Computation</span>
<span style="left:33.25px;top:223px;font:12px 'Liberation Sans', sans-serif;line-height:12px;letter-spacing:-0.150px;color:#000;transform:scaleX(0.8762);transform-origin:0 0;">Remove</span>
<span style="left:23.30px;top:237px;font:12px 'Liberation Sans', sans-serif;line-height:12px;letter-spacing:-0.150px;color:#000;transform:scaleX(0.8776);transform-origin:0 0;">Computation</span>
<span style="left:145.00px;top:635px;font:12px 'Liberation Sans', sans-serif;line-height:12px;letter-spacing:-0.150px;color:#000;transform:scaleX(0.8142);transform-origin:0 0;">OK</span>
<span style="left:219.50px;top:635px;font:12px 'Liberation Sans', sans-serif;line-height:12px;letter-spacing:-0.150px;color:#000;transform:scaleX(0.8834);transform-origin:0 0;">Apply</span>
<span style="left:298.25px;top:635px;font:12px 'Liberation Sans', sans-serif;line-height:12px;letter-spacing:-0.150px;color:#000;transform:scaleX(0.8878);transform-origin:0 0;">Cancel</span>
<span style="left:156.50px;top:35px;font:bold 12px 'Liberation Sans', sans-serif;line-height:12px;letter-spacing:0.036px;color:#000;">Sercel 1</span>
<span style="left:190.00px;top:51px;font:12px 'Liberation Sans', sans-serif;line-height:12px;letter-spacing:-0.150px;color:#000;transform:scaleX(0.9015);transform-origin:0 0;">Vessel</span>
<span style="left:191.50px;top:67px;font:bold 12px 'Liberation Sans', sans-serif;line-height:12px;letter-spacing:0.342px;color:#000;">ROV</span>
<span style="left:210.00px;top:83px;font:12px 'Liberation Sans', sans-serif;line-height:12px;letter-spacing:-0.150px;color:#000;transform:scaleX(0.8775);transform-origin:0 0;">FP Bathy</span>
<span style="left:210.00px;top:99px;font:12px 'Liberation Sans', sans-serif;line-height:12px;letter-spacing:-0.150px;color:#000;transform:scaleX(0.8884);transform-origin:0 0;">FP Gyro Octans</span>
<span style="left:210.00px;top:115px;font:12px 'Liberation Sans', sans-serif;line-height:12px;letter-spacing:-0.150px;color:#000;transform:scaleX(0.9145);transform-origin:0 0;">FP MRU octans</span>
<span style="left:210.00px;top:131px;font:12px 'Liberation Sans', sans-serif;line-height:12px;letter-spacing:-0.150px;color:#000;transform:scaleX(0.9034);transform-origin:0 0;">FP Seabat 8125</span>
<span style="left:210.00px;top:147px;font:12px 'Liberation Sans', sans-serif;line-height:12px;letter-spacing:-0.150px;color:#000;transform:scaleX(0.8958);transform-origin:0 0;">FP EM3000</span>
<span style="left:210.00px;top:163px;font:12px 'Liberation Sans', sans-serif;line-height:12px;letter-spacing:-0.150px;color:#000;transform:scaleX(0.9007);transform-origin:0 0;">FP Pipe tracker</span>
<span style="left:194.00px;top:179px;font:12px 'Liberation Sans', sans-serif;line-height:12px;letter-spacing:-0.150px;color:#000;transform:scaleX(0.8855);transform-origin:0 0;">Offset System ROV</span>
<span style="left:156.00px;top:195px;font:12px 'Liberation Sans', sans-serif;line-height:12px;letter-spacing:-0.150px;color:#000;transform:scaleX(0.8997);transform-origin:0 0;">Seabat Synchronisation</span>
<span style="left:156.00px;top:211px;font:12px 'Liberation Sans', sans-serif;line-height:12px;letter-spacing:-0.150px;color:#000;transform:scaleX(0.9050);transform-origin:0 0;">Output GGA to DP</span>
<span style="left:318.00px;top:37px;font:12px 'Liberation Sans', sans-serif;line-height:12px;letter-spacing:-0.150px;color:#000;transform:scaleX(0.8640);transform-origin:0 0;">Position Filter</span>
<span style="left:391.50px;top:39px;font:12px 'Liberation Sans', sans-serif;line-height:12px;letter-spacing:-0.150px;color:#000;transform:scaleX(0.8771);transform-origin:0 0;">Position Results</span>
<span style="left:478.00px;top:39px;font:12px 'Liberation Sans', sans-serif;line-height:12px;letter-spacing:-0.150px;color:#000;transform:scaleX(0.8902);transform-origin:0 0;">Attitude</span>
<span style="left:526.00px;top:39px;font:12px 'Liberation Sans', sans-serif;line-height:12px;letter-spacing:-0.150px;color:#000;transform:scaleX(0.8840);transform-origin:0 0;">Height</span>
<span style="left:328.50px;top:64px;font:12px 'Liberation Sans', sans-serif;line-height:12px;letter-spacing:-0.150px;color:#000;transform:scaleX(0.8535);transform-origin:0 0;">Filter Parameters</span>
<span style="left:331.50px;top:86px;font:11px 'Liberation Sans', sans-serif;line-height:11px;letter-spacing:-0.197px;color:#000;">General Parameters</span>
<span style="left:644.75px;top:86px;font:11px 'Liberation Sans', sans-serif;line-height:11px;letter-spacing:0.042px;color:#000;">Setting</span>
<span style="left:331.50px;top:103px;font:11px 'Liberation Sans', sans-serif;line-height:11px;letter-spacing:-0.359px;color:#000;">Dynamic model</span>
<span style="left:579.90px;top:103px;font:11px 'Liberation Sans', sans-serif;line-height:11px;letter-spacing:-0.142px;color:#000;">Kalman - 2D Constant Velocity</span>
<span style="left:331.50px;top:120px;font:11px 'Liberation Sans', sans-serif;line-height:11px;letter-spacing:0.125px;color:#000;">Filter strength</span>
<span style="left:634.00px;top:120px;font:11px 'Liberation Sans', sans-serif;line-height:11px;letter-spacing:-0.425px;color:#000;">Medium</span>
<span style="left:331.50px;top:167px;font:11px 'Liberation Sans', sans-serif;line-height:11px;letter-spacing:-0.077px;color:#000;">Extended Parameters</span>
<span style="left:640.70px;top:167px;font:11px 'Liberation Sans', sans-serif;line-height:11px;letter-spacing:-0.553px;color:#000;">Noise SD</span>
<span style="left:347.50px;top:184px;font:11px 'Liberation Sans', sans-serif;line-height:11px;letter-spacing:0.064px;color:#000;">Filter object height</span>
<span style="left:641.70px;top:184px;font:11px 'Liberation Sans', sans-serif;line-height:11px;letter-spacing:0.121px;color:#000;">0.05 [m]</span>
<span style="left:347.50px;top:201px;font:11px 'Liberation Sans', sans-serif;line-height:11px;letter-spacing:-0.076px;color:#000;">Use object heading</span>
<span style="left:636.60px;top:201px;font:11px 'Liberation Sans', sans-serif;line-height:11px;letter-spacing:0.207px;color:#000;">0.05 [deg]</span>
<span style="left:347.50px;top:218px;font:11px 'Liberation Sans', sans-serif;line-height:11px;letter-spacing:-0.057px;color:#000;">Add speed observation</span>
<span style="left:637.00px;top:218px;font:11px 'Liberation Sans', sans-serif;line-height:11px;letter-spacing:0.189px;color:#000;">0.10 [m/s]</span>
<span style="left:347.50px;top:235px;font:11px 'Liberation Sans', sans-serif;line-height:11px;letter-spacing:-0.056px;color:#000;">Add course observation</span>
<span style="left:636.60px;top:235px;font:11px 'Liberation Sans', sans-serif;line-height:11px;letter-spacing:0.207px;color:#000;">0.05 [deg]</span>
<span style="left:331.50px;top:283px;font:11px 'Liberation Sans', sans-serif;line-height:11px;letter-spacing:-0.037px;color:#000;">Observations</span>
<span style="left:564.25px;top:283px;font:11px 'Liberation Sans', sans-serif;line-height:11px;letter-spacing:0.042px;color:#000;">Setting</span>
<span style="left:735.30px;top:283px;font:11px 'Liberation Sans', sans-serif;line-height:11px;letter-spacing:-1.881px;color:#000;">SD</span>
<span style="left:331.50px;top:300px;font:11px 'Liberation Sans', sans-serif;line-height:11px;letter-spacing:-0.234px;color:#000;">Course</span>
<span style="left:538.35px;top:300px;font:11px 'Liberation Sans', sans-serif;line-height:11px;letter-spacing:-0.122px;color:#000;">FP doppler dir</span>
<span style="left:715.80px;top:300px;font:11px 'Liberation Sans', sans-serif;line-height:11px;letter-spacing:0.274px;color:#000;">0.60 [deg]</span>
<span style="left:331.50px;top:317px;font:11px 'Liberation Sans', sans-serif;line-height:11px;letter-spacing:-0.353px;color:#000;">Speed</span>
<span style="left:529.95px;top:317px;font:11px 'Liberation Sans', sans-serif;line-height:11px;letter-spacing:-0.251px;color:#000;">FP Doppler speed</span>
<span style="left:716.25px;top:317px;font:11px 'Liberation Sans', sans-serif;line-height:11px;letter-spacing:0.134px;color:#000;">0.20 [m/s]</span>
<span style="left:331.50px;top:351px;font:11px 'Liberation Sans', sans-serif;line-height:11px;letter-spacing:-0.077px;color:#000;">Observation Parameters</span>
<span style="left:644.75px;top:351px;font:11px 'Liberation Sans', sans-serif;line-height:11px;letter-spacing:0.042px;color:#000;">Setting</span>
<span style="left:331.50px;top:368px;font:11px 'Liberation Sans', sans-serif;line-height:11px;letter-spacing:-0.026px;color:#000;">Reject speeds above:</span>
<span style="left:636.20px;top:368px;font:11px 'Liberation Sans', sans-serif;line-height:11px;letter-spacing:0.145px;color:#000;">2.00 [m/s]</span>
</body></html>
